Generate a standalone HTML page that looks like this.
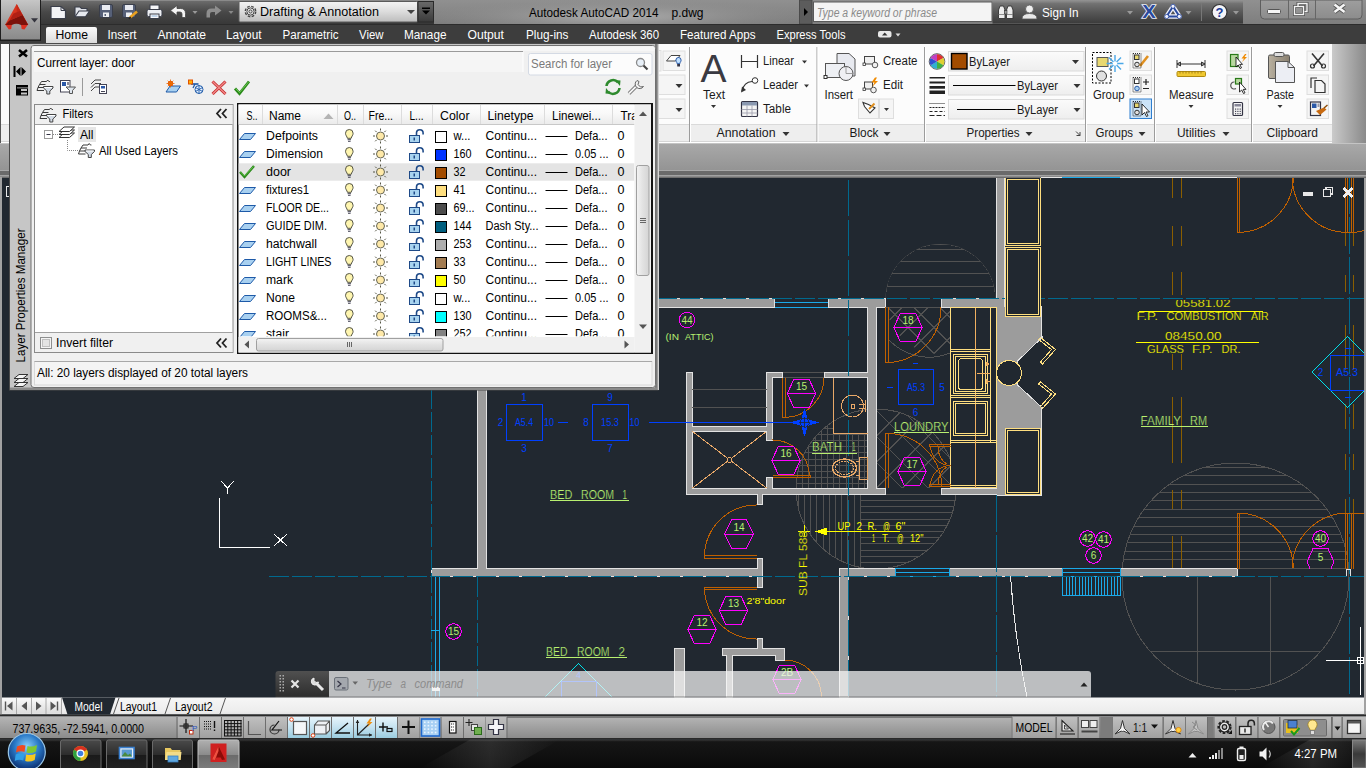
<!DOCTYPE html>
<html><head><meta charset="utf-8">
<style>
*{box-sizing:border-box;margin:0;padding:0}
html,body{width:1366px;height:768px;overflow:hidden;background:#212830;font-family:"Liberation Sans",sans-serif;font-size:12px;color:#000}
.a{position:absolute}
.t{position:absolute;white-space:nowrap;line-height:1}
#title{left:0;top:0;width:1366px;height:24px;background:linear-gradient(#8e8e8e,#7c7c7c)}
#qat{left:40px;top:0;width:394px;height:24px;background:linear-gradient(#6a6a6a 0%,#4a4a4a 45%,#3a3a3a 100%)}
#menubar{left:0;top:24px;width:1366px;height:20px;background:#3c3c3c}
#ribbon{left:0;top:44px;width:1332px;height:99px;background:#fff}
#ribtitle{left:0;top:123px;width:1332px;height:19px;background:#ececec}
#ribright{left:1332px;top:44px;width:34px;height:99px;background:linear-gradient(90deg,#c8c8c8,#8c8c8c)}
#band{left:0;top:143px;width:1366px;height:34px;background:linear-gradient(#a9a9a9 0,#949494 27px,#6a6a6a 28px,#6a6a6a 32px,#9c9c9c 32px,#9c9c9c 34px)}
#draw{left:0;top:177px;width:1366px;height:521px;background:#212830}
#tabs{left:0;top:698px;width:1366px;height:18px;background:#f0f0f0}
#status{left:0;top:716px;width:1366px;height:23px;background:linear-gradient(#b4b4b4,#8a8a8a)}
#task{left:0;top:739px;width:1366px;height:29px;background:linear-gradient(#2a2a2a,#0c0c0c)}
.mt{color:#fff;font-size:12.5px;top:29px}
</style></head><body>
<div id="draw" class="a"></div>
<svg class="a" style="left:0;top:0" width="1366" height="768" viewBox="0 0 1366 768" font-family="Liberation Sans, sans-serif" shape-rendering="crispEdges">
<defs>
<clipPath id="cd"><rect x="0" y="177" width="1366" height="520.5"/></clipPath>
</defs>
<g clip-path="url(#cd)" fill="none" stroke-width="1">
<clipPath id="cA1"><path d="M885.5 299 A55 55 0 0 1 995.5 299 Z"/></clipPath>
<clipPath id="cA2"><path d="M887 307 H950 V354 H887 Z"/></clipPath>
<circle cx="940.5" cy="299" r="55" stroke="#525252" clip-path="url(#cA1)"/>
<g clip-path="url(#cA1)">
<line x1="880" y1="249.5" x2="1000" y2="249.5" stroke="#525252" stroke-width="1" />
<line x1="880" y1="261.5" x2="1000" y2="261.5" stroke="#525252" stroke-width="1" />
<line x1="880" y1="273.5" x2="1000" y2="273.5" stroke="#525252" stroke-width="1" />
<line x1="880" y1="286.5" x2="1000" y2="286.5" stroke="#525252" stroke-width="1" />
</g>
<clipPath id="cA3"><circle cx="940.5" cy="299" r="55"/></clipPath>
<g clip-path="url(#cA3)"><g clip-path="url(#cA2)">
<line x1="731.3" y1="307" x2="791.3" y2="367" stroke="#525252" stroke-width="1" />
<line x1="746.7" y1="307" x2="686.7" y2="367" stroke="#525252" stroke-width="1" />
<line x1="757.3" y1="307" x2="817.3" y2="367" stroke="#525252" stroke-width="1" />
<line x1="772.7" y1="307" x2="712.7" y2="367" stroke="#525252" stroke-width="1" />
<line x1="783.3" y1="307" x2="843.3" y2="367" stroke="#525252" stroke-width="1" />
<line x1="798.7" y1="307" x2="738.7" y2="367" stroke="#525252" stroke-width="1" />
<line x1="809.3" y1="307" x2="869.3" y2="367" stroke="#525252" stroke-width="1" />
<line x1="824.7" y1="307" x2="764.7" y2="367" stroke="#525252" stroke-width="1" />
<line x1="835.3" y1="307" x2="895.3" y2="367" stroke="#525252" stroke-width="1" />
<line x1="850.7" y1="307" x2="790.7" y2="367" stroke="#525252" stroke-width="1" />
<line x1="861.3" y1="307" x2="921.3" y2="367" stroke="#525252" stroke-width="1" />
<line x1="876.7" y1="307" x2="816.7" y2="367" stroke="#525252" stroke-width="1" />
<line x1="887.3" y1="307" x2="947.3" y2="367" stroke="#525252" stroke-width="1" />
<line x1="902.7" y1="307" x2="842.7" y2="367" stroke="#525252" stroke-width="1" />
<line x1="913.3" y1="307" x2="973.3" y2="367" stroke="#525252" stroke-width="1" />
<line x1="928.7" y1="307" x2="868.7" y2="367" stroke="#525252" stroke-width="1" />
<line x1="939.3" y1="307" x2="999.3" y2="367" stroke="#525252" stroke-width="1" />
<line x1="954.7" y1="307" x2="894.7" y2="367" stroke="#525252" stroke-width="1" />
<line x1="965.3" y1="307" x2="1025.3" y2="367" stroke="#525252" stroke-width="1" />
<line x1="980.7" y1="307" x2="920.7" y2="367" stroke="#525252" stroke-width="1" />
<line x1="991.3" y1="307" x2="1051.3" y2="367" stroke="#525252" stroke-width="1" />
<line x1="1006.7" y1="307" x2="946.7" y2="367" stroke="#525252" stroke-width="1" />
<line x1="1017.3" y1="307" x2="1077.3" y2="367" stroke="#525252" stroke-width="1" />
<line x1="1032.7" y1="307" x2="972.7" y2="367" stroke="#525252" stroke-width="1" />
<line x1="1043.3" y1="307" x2="1103.3" y2="367" stroke="#525252" stroke-width="1" />
<line x1="1058.7" y1="307" x2="998.7" y2="367" stroke="#525252" stroke-width="1" />
<line x1="1069.3" y1="307" x2="1129.3" y2="367" stroke="#525252" stroke-width="1" />
<line x1="1084.7" y1="307" x2="1024.7" y2="367" stroke="#525252" stroke-width="1" />
</g>
<path d="M887 351 A55 55 0 0 0 950 353" stroke="#525252" clip-path="url(#cA2)"/>
</g>
<path d="M889 340 A55 55 0 0 0 950 353" stroke="#525252"/>
<clipPath id="cB"><circle cx="876" cy="489" r="80"/></clipPath>
<circle cx="876" cy="489" r="80" stroke="#525252"/>
<clipPath id="cB1"><path d="M772 378 H833 V434 H867.5 V488 H772 Z"/></clipPath>
<g clip-path="url(#cB)"><g clip-path="url(#cB1)">
<line x1="796.5" y1="378" x2="796.5" y2="488" stroke="#525252" stroke-width="1" />
<line x1="802.5" y1="378" x2="802.5" y2="488" stroke="#525252" stroke-width="1" />
<line x1="808.5" y1="378" x2="808.5" y2="488" stroke="#525252" stroke-width="1" />
<line x1="815.5" y1="378" x2="815.5" y2="488" stroke="#525252" stroke-width="1" />
<line x1="821.5" y1="378" x2="821.5" y2="488" stroke="#525252" stroke-width="1" />
<line x1="827.5" y1="378" x2="827.5" y2="488" stroke="#525252" stroke-width="1" />
<line x1="833.5" y1="378" x2="833.5" y2="488" stroke="#525252" stroke-width="1" />
<line x1="839.5" y1="378" x2="839.5" y2="488" stroke="#525252" stroke-width="1" />
<line x1="846.5" y1="378" x2="846.5" y2="488" stroke="#525252" stroke-width="1" />
<line x1="852.5" y1="378" x2="852.5" y2="488" stroke="#525252" stroke-width="1" />
<line x1="858.5" y1="378" x2="858.5" y2="488" stroke="#525252" stroke-width="1" />
<line x1="864.5" y1="378" x2="864.5" y2="488" stroke="#525252" stroke-width="1" />
<line x1="772" y1="409.5" x2="868" y2="409.5" stroke="#525252" stroke-width="1" />
<line x1="772" y1="415.5" x2="868" y2="415.5" stroke="#525252" stroke-width="1" />
<line x1="772" y1="421.5" x2="868" y2="421.5" stroke="#525252" stroke-width="1" />
<line x1="772" y1="428.5" x2="868" y2="428.5" stroke="#525252" stroke-width="1" />
<line x1="772" y1="434.5" x2="868" y2="434.5" stroke="#525252" stroke-width="1" />
<line x1="772" y1="440.5" x2="868" y2="440.5" stroke="#525252" stroke-width="1" />
<line x1="772" y1="446.5" x2="868" y2="446.5" stroke="#525252" stroke-width="1" />
<line x1="772" y1="452.5" x2="868" y2="452.5" stroke="#525252" stroke-width="1" />
<line x1="772" y1="459.5" x2="868" y2="459.5" stroke="#525252" stroke-width="1" />
<line x1="772" y1="465.5" x2="868" y2="465.5" stroke="#525252" stroke-width="1" />
<line x1="772" y1="471.5" x2="868" y2="471.5" stroke="#525252" stroke-width="1" />
<line x1="772" y1="477.5" x2="868" y2="477.5" stroke="#525252" stroke-width="1" />
<line x1="772" y1="483.5" x2="868" y2="483.5" stroke="#525252" stroke-width="1" />
</g></g>
<clipPath id="cB2"><rect x="877" y="405" width="74" height="83"/></clipPath>
<g clip-path="url(#cB)"><g clip-path="url(#cB2)">
<line x1="710" y1="400" x2="810" y2="500" stroke="#525252" stroke-width="1" />
<line x1="756.3" y1="400" x2="656.3" y2="500" stroke="#525252" stroke-width="1" />
<line x1="736" y1="400" x2="836" y2="500" stroke="#525252" stroke-width="1" />
<line x1="782.3" y1="400" x2="682.3" y2="500" stroke="#525252" stroke-width="1" />
<line x1="762" y1="400" x2="862" y2="500" stroke="#525252" stroke-width="1" />
<line x1="808.3" y1="400" x2="708.3" y2="500" stroke="#525252" stroke-width="1" />
<line x1="788" y1="400" x2="888" y2="500" stroke="#525252" stroke-width="1" />
<line x1="834.3" y1="400" x2="734.3" y2="500" stroke="#525252" stroke-width="1" />
<line x1="814" y1="400" x2="914" y2="500" stroke="#525252" stroke-width="1" />
<line x1="860.3" y1="400" x2="760.3" y2="500" stroke="#525252" stroke-width="1" />
<line x1="840" y1="400" x2="940" y2="500" stroke="#525252" stroke-width="1" />
<line x1="886.3" y1="400" x2="786.3" y2="500" stroke="#525252" stroke-width="1" />
<line x1="866" y1="400" x2="966" y2="500" stroke="#525252" stroke-width="1" />
<line x1="912.3" y1="400" x2="812.3" y2="500" stroke="#525252" stroke-width="1" />
<line x1="892" y1="400" x2="992" y2="500" stroke="#525252" stroke-width="1" />
<line x1="938.3" y1="400" x2="838.3" y2="500" stroke="#525252" stroke-width="1" />
<line x1="918" y1="400" x2="1018" y2="500" stroke="#525252" stroke-width="1" />
<line x1="964.3" y1="400" x2="864.3" y2="500" stroke="#525252" stroke-width="1" />
<line x1="944" y1="400" x2="1044" y2="500" stroke="#525252" stroke-width="1" />
<line x1="990.3" y1="400" x2="890.3" y2="500" stroke="#525252" stroke-width="1" />
<line x1="970" y1="400" x2="1070" y2="500" stroke="#525252" stroke-width="1" />
<line x1="1016.3" y1="400" x2="916.3" y2="500" stroke="#525252" stroke-width="1" />
<line x1="996" y1="400" x2="1096" y2="500" stroke="#525252" stroke-width="1" />
<line x1="1042.3" y1="400" x2="942.3" y2="500" stroke="#525252" stroke-width="1" />
<line x1="1022" y1="400" x2="1122" y2="500" stroke="#525252" stroke-width="1" />
<line x1="1068.3" y1="400" x2="968.3" y2="500" stroke="#525252" stroke-width="1" />
<line x1="1048" y1="400" x2="1148" y2="500" stroke="#525252" stroke-width="1" />
<line x1="1094.3" y1="400" x2="994.3" y2="500" stroke="#525252" stroke-width="1" />
</g></g>
<clipPath id="cB3"><rect x="790" y="495" width="70" height="80"/></clipPath>
<g clip-path="url(#cB)"><g clip-path="url(#cB3)">
<line x1="798.5" y1="495" x2="798.5" y2="575" stroke="#525252" stroke-width="1" />
<line x1="804.5" y1="495" x2="804.5" y2="575" stroke="#525252" stroke-width="1" />
<line x1="810.5" y1="495" x2="810.5" y2="575" stroke="#525252" stroke-width="1" />
<line x1="816.5" y1="495" x2="816.5" y2="575" stroke="#525252" stroke-width="1" />
<line x1="823.5" y1="495" x2="823.5" y2="575" stroke="#525252" stroke-width="1" />
<line x1="829.5" y1="495" x2="829.5" y2="575" stroke="#525252" stroke-width="1" />
<line x1="835.5" y1="495" x2="835.5" y2="575" stroke="#525252" stroke-width="1" />
<line x1="841.5" y1="495" x2="841.5" y2="575" stroke="#525252" stroke-width="1" />
<line x1="847.5" y1="495" x2="847.5" y2="575" stroke="#525252" stroke-width="1" />
<line x1="854.5" y1="495" x2="854.5" y2="575" stroke="#525252" stroke-width="1" />
<line x1="860.5" y1="495" x2="860.5" y2="575" stroke="#525252" stroke-width="1" />
</g></g>
<clipPath id="cB4"><rect x="860" y="495" width="100" height="80"/></clipPath>
<g clip-path="url(#cB)"><g clip-path="url(#cB4)">
<line x1="860" y1="500.5" x2="960" y2="500.5" stroke="#525252" stroke-width="1" />
<line x1="860" y1="506.5" x2="960" y2="506.5" stroke="#525252" stroke-width="1" />
<line x1="860" y1="512.5" x2="960" y2="512.5" stroke="#525252" stroke-width="1" />
<line x1="860" y1="519.5" x2="960" y2="519.5" stroke="#525252" stroke-width="1" />
<line x1="860" y1="525.5" x2="960" y2="525.5" stroke="#525252" stroke-width="1" />
<line x1="860" y1="531.5" x2="960" y2="531.5" stroke="#525252" stroke-width="1" />
<line x1="860" y1="537.5" x2="960" y2="537.5" stroke="#525252" stroke-width="1" />
<line x1="860" y1="543.5" x2="960" y2="543.5" stroke="#525252" stroke-width="1" />
<line x1="860" y1="550.5" x2="960" y2="550.5" stroke="#525252" stroke-width="1" />
<line x1="860" y1="556.5" x2="960" y2="556.5" stroke="#525252" stroke-width="1" />
<line x1="860" y1="562.5" x2="960" y2="562.5" stroke="#525252" stroke-width="1" />
<line x1="860" y1="568.5" x2="960" y2="568.5" stroke="#525252" stroke-width="1" />
<line x1="860" y1="574.5" x2="960" y2="574.5" stroke="#525252" stroke-width="1" />
</g></g>
<line x1="860.5" y1="495" x2="860.5" y2="568" stroke="#525252" stroke-width="1" />
<clipPath id="cC"><circle cx="1235.5" cy="576.5" r="113.5"/></clipPath>
<circle cx="1235.5" cy="576.5" r="113.5" stroke="#525252"/>
<g clip-path="url(#cC)">
<line x1="1120" y1="467.5" x2="1350" y2="467.5" stroke="#525252" stroke-width="1" />
<line x1="1120" y1="475.5" x2="1350" y2="475.5" stroke="#525252" stroke-width="1" />
<line x1="1120" y1="484.5" x2="1350" y2="484.5" stroke="#525252" stroke-width="1" />
<line x1="1120" y1="492.5" x2="1350" y2="492.5" stroke="#525252" stroke-width="1" />
<line x1="1120" y1="500.5" x2="1350" y2="500.5" stroke="#525252" stroke-width="1" />
<line x1="1120" y1="509.5" x2="1350" y2="509.5" stroke="#525252" stroke-width="1" />
<line x1="1120" y1="517.5" x2="1350" y2="517.5" stroke="#525252" stroke-width="1" />
<line x1="1120" y1="526.5" x2="1350" y2="526.5" stroke="#525252" stroke-width="1" />
<line x1="1120" y1="534.5" x2="1350" y2="534.5" stroke="#525252" stroke-width="1" />
<line x1="1120" y1="542.5" x2="1350" y2="542.5" stroke="#525252" stroke-width="1" />
<line x1="1120" y1="551.5" x2="1350" y2="551.5" stroke="#525252" stroke-width="1" />
<line x1="1120" y1="559.5" x2="1350" y2="559.5" stroke="#525252" stroke-width="1" />
<line x1="1197.5" y1="576" x2="1197.5" y2="692" stroke="#525252" stroke-width="1" />
<line x1="1270.5" y1="576" x2="1270.5" y2="692" stroke="#525252" stroke-width="1" />
<line x1="1120" y1="651.5" x2="1350" y2="651.5" stroke="#525252" stroke-width="1" />
</g>
<filter id="er" color-interpolation-filters="sRGB" filterUnits="userSpaceOnUse" x="0" y="0" width="1366" height="768"><feMorphology operator="erode" radius="1"/><feColorMatrix type="matrix" values="0 0 0 0 0.61 0 0 0 0 0.61 0 0 0 0 0.61 0 0 0 1 0"/></filter>
<g fill="#e2e2e2" stroke="none"><rect x="640" y="298" width="135" height="10"/><rect x="828" y="298" width="58" height="10"/><rect x="941" y="298" width="64" height="10"/><rect x="867" y="306" width="10" height="189"/><rect x="996" y="177" width="9" height="131"/><rect x="996" y="306" width="46" height="190"/><rect x="941" y="488" width="64" height="7"/><rect x="686" y="372" width="7" height="123"/><rect x="686" y="488" width="200" height="7"/><rect x="766" y="372" width="7" height="69"/><rect x="766" y="477" width="7" height="13"/><rect x="766" y="372" width="17" height="6"/><rect x="824" y="372" width="45" height="6"/><rect x="691" y="426" width="77" height="6"/><rect x="757" y="493" width="6" height="12"/><rect x="757" y="558" width="6" height="30"/><rect x="477" y="389" width="10" height="181"/><rect x="431" y="568" width="332" height="9"/><rect x="757" y="638" width="6" height="12"/><rect x="722" y="648" width="63" height="8"/><rect x="726" y="654" width="7" height="45"/><rect x="775" y="654" width="10" height="7"/><rect x="674" y="648" width="11" height="51"/><rect x="839" y="568" width="10" height="131"/><rect x="839" y="568" width="57" height="9"/><rect x="949" y="568" width="114" height="9"/><rect x="1120" y="568" width="118" height="9"/></g>
<g fill="#e2e2e2" stroke="none" filter="url(#er)"><rect x="640" y="298" width="135" height="10"/><rect x="828" y="298" width="58" height="10"/><rect x="941" y="298" width="64" height="10"/><rect x="867" y="306" width="10" height="189"/><rect x="996" y="177" width="9" height="131"/><rect x="996" y="306" width="46" height="190"/><rect x="941" y="488" width="64" height="7"/><rect x="686" y="372" width="7" height="123"/><rect x="686" y="488" width="200" height="7"/><rect x="766" y="372" width="7" height="69"/><rect x="766" y="477" width="7" height="13"/><rect x="766" y="372" width="17" height="6"/><rect x="824" y="372" width="45" height="6"/><rect x="691" y="426" width="77" height="6"/><rect x="757" y="493" width="6" height="12"/><rect x="757" y="558" width="6" height="30"/><rect x="477" y="389" width="10" height="181"/><rect x="431" y="568" width="332" height="9"/><rect x="757" y="638" width="6" height="12"/><rect x="722" y="648" width="63" height="8"/><rect x="726" y="654" width="7" height="45"/><rect x="775" y="654" width="10" height="7"/><rect x="674" y="648" width="11" height="51"/><rect x="839" y="568" width="10" height="131"/><rect x="839" y="568" width="57" height="9"/><rect x="949" y="568" width="114" height="9"/><rect x="1120" y="568" width="118" height="9"/></g>
<path d="M1042 337.5 L1017 361.5 V384.5 L1042 407.5 Z" fill="#212830" stroke="#e2e2e2" stroke-width="1"/>
<rect x="1041" y="338" width="2" height="69" fill="#212830" stroke="none" />
<line x1="775" y1="302.5" x2="828" y2="302.5" stroke="#1aa9e8" stroke-width="1" />
<line x1="775" y1="307.5" x2="828" y2="307.5" stroke="#1aa9e8" stroke-width="1" />
<line x1="783" y1="372.5" x2="824" y2="372.5" stroke="#525252" stroke-width="1" />
<line x1="783" y1="377.5" x2="824" y2="377.5" stroke="#525252" stroke-width="1" />
<line x1="692" y1="389.5" x2="766.5" y2="389.5" stroke="#525252" stroke-width="1" />
<line x1="692" y1="407.5" x2="766.5" y2="407.5" stroke="#525252" stroke-width="1" />
<line x1="886" y1="307.5" x2="941" y2="307.5" stroke="#525252" stroke-width="1" />
<line x1="886" y1="494.5" x2="941" y2="494.5" stroke="#525252" stroke-width="1" />
<line x1="895.5" y1="568.5" x2="949.5" y2="568.5" stroke="#1aa9e8" stroke-width="1" />
<line x1="895.5" y1="572.5" x2="949.5" y2="572.5" stroke="#1aa9e8" stroke-width="1" />
<line x1="895.5" y1="576.5" x2="949.5" y2="576.5" stroke="#1aa9e8" stroke-width="1" />
<line x1="895.5" y1="568" x2="895.5" y2="576" stroke="#1aa9e8" stroke-width="1" />
<line x1="949.5" y1="568" x2="949.5" y2="576" stroke="#1aa9e8" stroke-width="1" />
<line x1="1062.5" y1="568.5" x2="1120" y2="568.5" stroke="#1aa9e8" stroke-width="1" />
<line x1="1062.5" y1="572.5" x2="1120" y2="572.5" stroke="#1aa9e8" stroke-width="1" />
<line x1="1062.5" y1="576.5" x2="1120" y2="576.5" stroke="#1aa9e8" stroke-width="1" />
<line x1="1062.5" y1="568" x2="1062.5" y2="576" stroke="#1aa9e8" stroke-width="1" />
<line x1="1120.5" y1="568" x2="1120.5" y2="576" stroke="#1aa9e8" stroke-width="1" />
<line x1="1062.5" y1="576" x2="1062.5" y2="595.5" stroke="#1aa9e8" stroke-width="1" />
<line x1="1066.5" y1="576" x2="1066.5" y2="595.5" stroke="#1aa9e8" stroke-width="1" />
<line x1="1069.5" y1="576" x2="1069.5" y2="595.5" stroke="#1aa9e8" stroke-width="1" />
<line x1="1072.5" y1="576" x2="1072.5" y2="595.5" stroke="#1aa9e8" stroke-width="1" />
<line x1="1075.5" y1="576" x2="1075.5" y2="595.5" stroke="#1aa9e8" stroke-width="1" />
<line x1="1079.5" y1="576" x2="1079.5" y2="595.5" stroke="#1aa9e8" stroke-width="1" />
<line x1="1082.5" y1="576" x2="1082.5" y2="595.5" stroke="#1aa9e8" stroke-width="1" />
<line x1="1085.5" y1="576" x2="1085.5" y2="595.5" stroke="#1aa9e8" stroke-width="1" />
<line x1="1088.5" y1="576" x2="1088.5" y2="595.5" stroke="#1aa9e8" stroke-width="1" />
<line x1="1091.5" y1="576" x2="1091.5" y2="595.5" stroke="#1aa9e8" stroke-width="1" />
<line x1="1095.5" y1="576" x2="1095.5" y2="595.5" stroke="#1aa9e8" stroke-width="1" />
<line x1="1098.5" y1="576" x2="1098.5" y2="595.5" stroke="#1aa9e8" stroke-width="1" />
<line x1="1101.5" y1="576" x2="1101.5" y2="595.5" stroke="#1aa9e8" stroke-width="1" />
<line x1="1104.5" y1="576" x2="1104.5" y2="595.5" stroke="#1aa9e8" stroke-width="1" />
<line x1="1107.5" y1="576" x2="1107.5" y2="595.5" stroke="#1aa9e8" stroke-width="1" />
<line x1="1111.5" y1="576" x2="1111.5" y2="595.5" stroke="#1aa9e8" stroke-width="1" />
<line x1="1114.5" y1="576" x2="1114.5" y2="595.5" stroke="#1aa9e8" stroke-width="1" />
<line x1="1117.5" y1="576" x2="1117.5" y2="595.5" stroke="#1aa9e8" stroke-width="1" />
<line x1="1120.5" y1="576" x2="1120.5" y2="595.5" stroke="#1aa9e8" stroke-width="1" />
<line x1="1062" y1="595.5" x2="1120.5" y2="595.5" stroke="#1aa9e8" stroke-width="1" />
<line x1="1237.5" y1="568.5" x2="1348" y2="568.5" stroke="#525252" stroke-width="1" />
<line x1="657" y1="298.5" x2="1366" y2="298.5" stroke="#00698e" stroke-width="1" stroke-dasharray="20 3" />
<line x1="269" y1="576.5" x2="1366" y2="576.5" stroke="#00698e" stroke-width="1" stroke-dasharray="20 3" />
<line x1="431.5" y1="389" x2="431.5" y2="697" stroke="#00698e" stroke-width="1" stroke-dasharray="20 3" />
<line x1="848.5" y1="179.5" x2="848.5" y2="697" stroke="#00698e" stroke-width="1" stroke-dasharray="36.5 3.5" />
<line x1="996.5" y1="495" x2="996.5" y2="697" stroke="#00698e" stroke-width="1" stroke-dasharray="36.5 3.5" />
<line x1="1349.5" y1="177" x2="1349.5" y2="697" stroke="#00698e" stroke-width="1" stroke-dasharray="36.5 3.5" />
<line x1="477.5" y1="577" x2="477.5" y2="697" stroke="#00698e" stroke-width="1" stroke-dasharray="20 3" />
<line x1="435.5" y1="577" x2="435.5" y2="697" stroke="#1aa9e8" stroke-width="1" />
<line x1="439.5" y1="577" x2="439.5" y2="697" stroke="#1aa9e8" stroke-width="1" />
<line x1="431" y1="630.5" x2="439" y2="630.5" stroke="#1aa9e8" stroke-width="1" />
<rect x="431.5" y="686.5" width="8.0" height="4.5" fill="#e8e8e8" stroke="none" />
<line x1="1172.5" y1="177" x2="1172.5" y2="198" stroke="#8a5e00" stroke-width="1" />
<line x1="1172.5" y1="226" x2="1172.5" y2="246" stroke="#8a5e00" stroke-width="1" />
<line x1="1172.5" y1="272" x2="1172.5" y2="295" stroke="#8a5e00" stroke-width="1" />
<line x1="1172.5" y1="354" x2="1172.5" y2="370" stroke="#8a5e00" stroke-width="1" />
<line x1="1172.5" y1="397" x2="1172.5" y2="463" stroke="#8a5e00" stroke-width="1" />
<line x1="1172.5" y1="490" x2="1172.5" y2="509" stroke="#8a5e00" stroke-width="1" />
<line x1="1172.5" y1="536" x2="1172.5" y2="568" stroke="#8a5e00" stroke-width="1" />
<line x1="1181.5" y1="177" x2="1181.5" y2="198" stroke="#8a5e00" stroke-width="1" />
<line x1="1181.5" y1="226" x2="1181.5" y2="246" stroke="#8a5e00" stroke-width="1" />
<line x1="1181.5" y1="272" x2="1181.5" y2="295" stroke="#8a5e00" stroke-width="1" />
<line x1="1181.5" y1="354" x2="1181.5" y2="370" stroke="#8a5e00" stroke-width="1" />
<line x1="1181.5" y1="397" x2="1181.5" y2="463" stroke="#8a5e00" stroke-width="1" />
<line x1="1181.5" y1="490" x2="1181.5" y2="509" stroke="#8a5e00" stroke-width="1" />
<line x1="1181.5" y1="536" x2="1181.5" y2="568" stroke="#8a5e00" stroke-width="1" />
<line x1="1345.5" y1="177" x2="1345.5" y2="246" stroke="#8a5e00" stroke-width="1" />
<line x1="1345.5" y1="274.5" x2="1345.5" y2="292" stroke="#8a5e00" stroke-width="1" />
<line x1="1345.5" y1="324.5" x2="1345.5" y2="370" stroke="#8a5e00" stroke-width="1" />
<line x1="1345.5" y1="404" x2="1345.5" y2="429" stroke="#8a5e00" stroke-width="1" />
<line x1="1345.5" y1="454" x2="1345.5" y2="470" stroke="#8a5e00" stroke-width="1" />
<line x1="1345.5" y1="499" x2="1345.5" y2="513" stroke="#8a5e00" stroke-width="1" />
<line x1="1345.5" y1="536" x2="1345.5" y2="568" stroke="#8a5e00" stroke-width="1" />
<line x1="1353.5" y1="177" x2="1353.5" y2="246" stroke="#8a5e00" stroke-width="1" />
<line x1="1353.5" y1="274.5" x2="1353.5" y2="292" stroke="#8a5e00" stroke-width="1" />
<line x1="1353.5" y1="324.5" x2="1353.5" y2="370" stroke="#8a5e00" stroke-width="1" />
<line x1="1353.5" y1="404" x2="1353.5" y2="429" stroke="#8a5e00" stroke-width="1" />
<line x1="1353.5" y1="454" x2="1353.5" y2="470" stroke="#8a5e00" stroke-width="1" />
<line x1="1353.5" y1="499" x2="1353.5" y2="513" stroke="#8a5e00" stroke-width="1" />
<line x1="1353.5" y1="536" x2="1353.5" y2="568" stroke="#8a5e00" stroke-width="1" />
<rect x="1005.5" y="177.5" width="35.0" height="68.0" stroke="#ffdf80" fill="#212830"/>
<rect x="1007.5" y="179.5" width="31.0" height="64.0" stroke="#ffdf80"/>
<rect x="1005.5" y="247.5" width="35.0" height="69.0" stroke="#ffdf80" fill="#212830"/>
<rect x="1007.5" y="249.5" width="31.0" height="65.0" stroke="#ffdf80"/>
<rect x="1005.5" y="428.5" width="35.0" height="66.0" stroke="#ffdf80" fill="#212830"/>
<rect x="1007.5" y="430.5" width="31.0" height="62.0" stroke="#ffdf80"/>
<path d="M1040.5 337.5 L1055.5 349.5 L1042.5 364 L1040.5 362 L1051.5 349.5 L1038.5 339.5 Z" stroke="#ffdf80" stroke-width="1" fill="none" />
<path d="M1040.5 382.0 L1055.5 394.0 L1042.5 408.5 L1040.5 406.5 L1051.5 394.0 L1038.5 384.0 Z" stroke="#ffdf80" stroke-width="1" fill="none" />
<circle cx="1009" cy="373" r="12.5" stroke="#ffdf80" fill="#212830"/>
<rect x="950.5" y="307.5" width="46" height="180" stroke="#ffdf80" fill="#212830"/>
<line x1="990.5" y1="307.5" x2="990.5" y2="442" stroke="#ffdf80" stroke-width="1" />
<line x1="950.5" y1="349.5" x2="990.5" y2="349.5" stroke="#ffdf80" stroke-width="1" />
<line x1="950.5" y1="351.5" x2="990.5" y2="351.5" stroke="#ffdf80" stroke-width="1" />
<line x1="950.5" y1="395.5" x2="990.5" y2="395.5" stroke="#ffdf80" stroke-width="1" />
<line x1="950.5" y1="397.5" x2="990.5" y2="397.5" stroke="#ffdf80" stroke-width="1" />
<line x1="950.5" y1="440.5" x2="996.5" y2="440.5" stroke="#ffdf80" stroke-width="1" />
<line x1="950.5" y1="442.5" x2="996.5" y2="442.5" stroke="#ffdf80" stroke-width="1" />
<line x1="950.5" y1="485.5" x2="996.5" y2="485.5" stroke="#ffdf80" stroke-width="1" />
<line x1="975.5" y1="307.5" x2="975.5" y2="488" stroke="#f0b060" stroke-width="1" />
<rect x="953.5" y="354.5" width="34" height="39" stroke="#ffdf80"/>
<rect x="955.5" y="356.5" width="30" height="35" stroke="#ffdf80"/>
<rect x="958.5" y="358.5" width="24" height="31" rx="3" stroke="#ffdf80"/>
<rect x="953.5" y="401.5" width="34" height="34" stroke="#ffdf80"/>
<rect x="955.5" y="403.5" width="30" height="30" stroke="#ffdf80"/>
<line x1="976.5" y1="373.5" x2="989.5" y2="373.5" stroke="#f0b060" stroke-width="1" />
<path d="M986 362 l3 2 l-3 2 Z M986 379.5 l3 2 l-3 2 Z" stroke="#f0b060" stroke-width="1" fill="#f0b060" />
<line x1="692.5" y1="431.5" x2="766.5" y2="488" stroke="#e8a868" stroke-width="1" />
<line x1="692.5" y1="488" x2="766.5" y2="431.5" stroke="#e8a868" stroke-width="1" />
<circle cx="729.5" cy="460" r="2.5" stroke="#e8a868" fill="#212830"/>
<path d="M833.5 377.5 V433.5 H867.5" stroke="#e8a868" stroke-width="1" fill="none" />
<circle cx="852.5" cy="406" r="11" stroke="#e8a868"/>
<rect x="851" y="404" width="3" height="4" stroke="#e8a868"/>
<path d="M859 404 H866 M859 408 H866 M865 400 V412" stroke="#e8a868" stroke-width="1" fill="none" />
<ellipse cx="844.5" cy="468" rx="12" ry="9" stroke="#e8a868" stroke-width="1.5"/>
<ellipse cx="844.5" cy="468" rx="9" ry="6.5" stroke="#e8a868" stroke-dasharray="2 1"/>
<rect x="859.5" y="457.5" width="8" height="22" stroke="#e8a868" stroke-width="1.5"/>
<line x1="856" y1="461.5" x2="859" y2="461.5" stroke="#e8a868" stroke-width="1" />
<line x1="856" y1="475.5" x2="859" y2="475.5" stroke="#e8a868" stroke-width="1" />
<path d="M885.5 307 V362.5 H888 V307 M888 362.5 A55 55 0 0 0 941 307" stroke="#bf6000" stroke-width="1" fill="none" />
<path d="M782.5 377.5 V417.5 H785 V377.5 M785 417.5 A40 40 0 0 0 824 377.5" stroke="#bf6000" stroke-width="1" fill="none" />
<path d="M772.5 475 H810 V477.5 H772.5 M772.5 440 A37 37 0 0 1 809.5 475" stroke="#bf6000" stroke-width="1" fill="none" />
<path d="M885.5 488 V433.5 H888 V488 M888 433.5 A55 55 0 0 1 942 487" stroke="#bf6000" stroke-width="1" fill="none" />
<path d="M951 444.5 H929.5 V446.5 H951 M951 486.5 H929.5 V484.5 H951 M930.5 446.5 A20 20 0 0 0 950.5 465.5 A20 20 0 0 0 930.5 484.5 M938 446.5 A14 18 0 0 0 947 464 M938 484.5 A14 18 0 0 1 947 467" stroke="#bf6000" stroke-width="1" fill="none" />
<path d="M757 555.5 H704.5 V558 H757 M704.5 555.5 A52 52 0 0 1 757 505" stroke="#bf6000" stroke-width="1" fill="none" />
<path d="M757 587 H704.5 V589.5 H757 M704.5 589.5 A52 52 0 0 0 757 639" stroke="#bf6000" stroke-width="1" fill="none" />
<path d="M784.5 660 A37 37 0 0 1 821.5 697" stroke="#bf6000" stroke-width="1" fill="none" />
<path d="M1237.5 177 V232.5 H1239.5 V177 M1237.5 232.5 A55.8 55.8 0 0 0 1293.3 177 M1348 232.5 A55.8 55.8 0 0 1 1292.2 177 M1345.5 177 V232.5 H1353.5 V177 M1347.5 177 V232.5 M1351.5 177 V232.5 M1353.5 232.5 Q1360 232 1366 230" stroke="#bf6000" stroke-width="1" fill="none" />
<path d="M1237.5 568.5 V513 H1239.5 V568.5 M1237.5 513 H1243 M1237.5 513 A55.8 55.8 0 0 1 1293.3 568.5 M1348 513 A55.8 55.8 0 0 0 1292.2 568.5 M1345.5 568.5 V513 H1353.5 V568.5 M1347.5 568.5 V513 M1351.5 568.5 V513 M1353.5 513 H1366" stroke="#bf6000" stroke-width="1" fill="none" />
<path d="M1010.5 576 Q1015 640 1027 697" stroke="#e8e8e8" stroke-width="1" fill="none" />
<rect x="506.5" y="404.5" width="35.5" height="35.5" stroke="#0040ff"/>
<rect x="592" y="404.5" width="36" height="35.5" stroke="#0040ff"/>
<line x1="558" y1="422.5" x2="568" y2="422.5" stroke="#0040ff" stroke-width="1" />
<line x1="648.5" y1="422.5" x2="804" y2="422.5" stroke="#0040ff" stroke-width="1" />
<path d="M804.5 409 L807 419.5 L817.5 422.5 L807 425.5 L804.5 436 L802 425.5 L791.5 422.5 L802 419.5 Z" stroke="#0040ff" stroke-width="1" fill="#0040ff" />
<circle cx="804.5" cy="422.5" r="4.5" stroke="#212830" fill="none" stroke-width="0.8"/>
<path d="M804.5 417 V428 M799 422.5 H810" stroke="#212830" stroke-width="0.8" fill="none" />
<rect x="898.5" y="369.5" width="35" height="35" stroke="#0040ff"/>
<line x1="887" y1="387.5" x2="893" y2="387.5" stroke="#0040ff" stroke-width="1" />
<line x1="913" y1="363.5" x2="918" y2="363.5" stroke="#0040ff" stroke-width="1" />
<text x="524" y="425.5" fill="#0040ff" stroke="#212830" stroke-width="0" font-size="10" text-anchor="middle" textLength="18" lengthAdjust="spacingAndGlyphs" >A5.4</text>
<text x="524" y="401" fill="#0040ff" stroke="#212830" stroke-width="0" font-size="10" text-anchor="middle" >1</text>
<text x="500.5" y="425.5" fill="#0040ff" stroke="#212830" stroke-width="0" font-size="10" text-anchor="middle" >2</text>
<text x="549" y="425.5" fill="#0040ff" stroke="#212830" stroke-width="0" font-size="10" text-anchor="middle" textLength="10" lengthAdjust="spacingAndGlyphs" >10</text>
<text x="524" y="451.5" fill="#0040ff" stroke="#212830" stroke-width="0" font-size="10" text-anchor="middle" >3</text>
<text x="610" y="425.5" fill="#0040ff" stroke="#212830" stroke-width="0" font-size="10" text-anchor="middle" textLength="18" lengthAdjust="spacingAndGlyphs" >15.3</text>
<text x="610" y="401" fill="#0040ff" stroke="#212830" stroke-width="0" font-size="10" text-anchor="middle" >9</text>
<text x="586" y="425.5" fill="#0040ff" stroke="#212830" stroke-width="0" font-size="10" text-anchor="middle" >8</text>
<text x="634.5" y="425.5" fill="#0040ff" stroke="#212830" stroke-width="0" font-size="10" text-anchor="middle" textLength="10" lengthAdjust="spacingAndGlyphs" >10</text>
<text x="610" y="451.5" fill="#0040ff" stroke="#212830" stroke-width="0" font-size="10" text-anchor="middle" >7</text>
<text x="916" y="391" fill="#0040ff" stroke="#212830" stroke-width="0" font-size="10" text-anchor="middle" textLength="18" lengthAdjust="spacingAndGlyphs" >A5.3</text>
<text x="942" y="391" fill="#0040ff" stroke="#212830" stroke-width="0" font-size="10" text-anchor="middle" >5</text>
<text x="915.5" y="416" fill="#0040ff" stroke="#212830" stroke-width="0" font-size="10" text-anchor="middle" >6</text>
<path d="M1347.5 336.5 L1312 372 L1347.5 407.5 L1383 372 Z" stroke="#00e0e8" stroke-width="1" fill="none" />
<path d="M1366 355.5 H1330.5 V390.5 H1366" stroke="#0040ff" stroke-width="1" fill="none" />
<text x="1320.5" y="376" fill="#0040ff" stroke="#212830" stroke-width="0" font-size="10" text-anchor="middle" >2</text>
<text x="1347" y="376" fill="#0040ff" stroke="#212830" stroke-width="0" font-size="10" text-anchor="middle" textLength="22" lengthAdjust="spacingAndGlyphs" >A5.3</text>
<line x1="1345" y1="348.5" x2="1351" y2="348.5" stroke="#0040ff" stroke-width="1" />
<line x1="1345" y1="397.5" x2="1351" y2="397.5" stroke="#0040ff" stroke-width="1" />
<path d="M544.5 697.5 L578.5 663.5 L612.5 697.5" stroke="#00e0e8" stroke-width="1" fill="none" />
<path d="M561.5 697 V681.5 H596.5 V697" stroke="#0040ff" stroke-width="1" fill="none" />
<text x="578.5" y="677.5" fill="#0040ff" stroke="#212830" stroke-width="0" font-size="9" text-anchor="middle" >4</text>
<path d="M900.5 313.2 H915.5 L922.3 327.5 L915.5 341.8 H900.5 L893.7 327.5 Z M893.7 327.5 H922.3" stroke="#ff00ff" stroke-width="1" fill="none" />
<text x="908" y="324.0" fill="#b8f070" stroke="#212830" stroke-width="0" font-size="10" text-anchor="middle" >18</text>
<path d="M794.0 379.2 H809.0 L815.8 393.5 L809.0 407.8 H794.0 L787.2 393.5 Z M787.2 393.5 H815.8" stroke="#ff00ff" stroke-width="1" fill="none" />
<text x="801.5" y="390.0" fill="#b8f070" stroke="#212830" stroke-width="0" font-size="10" text-anchor="middle" >15</text>
<path d="M778.5 446.2 H793.5 L800.3 460.5 L793.5 474.8 H778.5 L771.7 460.5 Z M771.7 460.5 H800.3" stroke="#ff00ff" stroke-width="1" fill="none" />
<text x="786" y="457.0" fill="#b8f070" stroke="#212830" stroke-width="0" font-size="10" text-anchor="middle" >16</text>
<path d="M904.5 457.2 H919.5 L926.3 471.5 L919.5 485.8 H904.5 L897.7 471.5 Z M897.7 471.5 H926.3" stroke="#ff00ff" stroke-width="1" fill="none" />
<text x="912" y="468.0" fill="#b8f070" stroke="#212830" stroke-width="0" font-size="10" text-anchor="middle" >17</text>
<path d="M731.5 519.7 H746.5 L753.3 534 L746.5 548.3 H731.5 L724.7 534 Z M724.7 534 H753.3" stroke="#ff00ff" stroke-width="1" fill="none" />
<text x="739" y="530.5" fill="#b8f070" stroke="#212830" stroke-width="0" font-size="10" text-anchor="middle" >14</text>
<path d="M726.0 596.2 H741.0 L747.8 610.5 L741.0 624.8 H726.0 L719.2 610.5 Z M719.2 610.5 H747.8" stroke="#ff00ff" stroke-width="1" fill="none" />
<text x="733.5" y="607.0" fill="#b8f070" stroke="#212830" stroke-width="0" font-size="10" text-anchor="middle" >13</text>
<path d="M694.5 615.2 H709.5 L716.3 629.5 L709.5 643.8 H694.5 L687.7 629.5 Z M687.7 629.5 H716.3" stroke="#ff00ff" stroke-width="1" fill="none" />
<text x="702" y="626.0" fill="#b8f070" stroke="#212830" stroke-width="0" font-size="10" text-anchor="middle" >12</text>
<path d="M779.5 665.2 H794.5 L801.3 679.5 L794.5 693.8 H779.5 L772.7 679.5 Z M772.7 679.5 H801.3" stroke="#ff00ff" stroke-width="1" fill="none" />
<text x="787" y="676.0" fill="#b8f070" stroke="#212830" stroke-width="0" font-size="10" text-anchor="middle" >2B</text>
<circle cx="687" cy="320" r="7.8" stroke="#ff00ff"/>
<text x="687" y="323.5" fill="#b8f070" stroke="#212830" stroke-width="0" font-size="10" text-anchor="middle" >44</text>
<circle cx="453.5" cy="631.5" r="7.8" stroke="#ff00ff"/>
<text x="453.5" y="635.0" fill="#b8f070" stroke="#212830" stroke-width="0" font-size="10" text-anchor="middle" >15</text>
<circle cx="1087.5" cy="538.5" r="7.8" stroke="#ff00ff"/>
<text x="1087.5" y="542.0" fill="#b8f070" stroke="#212830" stroke-width="0" font-size="10" text-anchor="middle" >42</text>
<circle cx="1103.5" cy="539.5" r="7.8" stroke="#ff00ff"/>
<text x="1103.5" y="543.0" fill="#b8f070" stroke="#212830" stroke-width="0" font-size="10" text-anchor="middle" >41</text>
<circle cx="1093.5" cy="555.5" r="7.8" stroke="#ff00ff"/>
<text x="1093.5" y="559.0" fill="#b8f070" stroke="#212830" stroke-width="0" font-size="10" text-anchor="middle" >6</text>
<circle cx="1320.5" cy="538.5" r="7.8" stroke="#ff00ff"/>
<text x="1320.5" y="542.0" fill="#b8f070" stroke="#212830" stroke-width="0" font-size="10" text-anchor="middle" >40</text>
<path d="M1313 548.5 H1328 L1334 562 L1331 568.5 M1313 548.5 L1307 562 L1310 568.5" stroke="#ff00ff" stroke-width="1" fill="none" />
<text x="1320.5" y="560.5" fill="#b8f070" stroke="#212830" stroke-width="0" font-size="10" text-anchor="middle" >5</text>
<text x="665.5" y="339.5" fill="#b8f070" stroke="#212830" stroke-width="0" font-size="9.5" text-anchor="start" textLength="13.5" lengthAdjust="spacingAndGlyphs" >(IN</text>
<text x="685" y="339.5" fill="#b8f070" stroke="#212830" stroke-width="0" font-size="9.5" text-anchor="start" textLength="28.5" lengthAdjust="spacingAndGlyphs" >ATTIC)</text>
<text x="550" y="498.5" fill="#b8f070" stroke="#212830" stroke-width="0.2" font-size="12" text-anchor="start" textLength="22.5" lengthAdjust="spacingAndGlyphs" >BED</text>
<text x="581" y="498.5" fill="#b8f070" stroke="#212830" stroke-width="0.2" font-size="12" text-anchor="start" textLength="33" lengthAdjust="spacingAndGlyphs" >ROOM</text>
<text x="622.5" y="498.5" fill="#b8f070" stroke="#212830" stroke-width="0.2" font-size="12" text-anchor="start" textLength="4.5" lengthAdjust="spacingAndGlyphs" >1</text>
<line x1="550" y1="500.5" x2="629" y2="500.5" stroke="#b8f070" stroke-width="1" />
<text x="546" y="656" fill="#b8f070" stroke="#212830" stroke-width="0.2" font-size="12" text-anchor="start" textLength="21.5" lengthAdjust="spacingAndGlyphs" >BED</text>
<text x="577" y="656" fill="#b8f070" stroke="#212830" stroke-width="0.2" font-size="12" text-anchor="start" textLength="32.5" lengthAdjust="spacingAndGlyphs" >ROOM</text>
<text x="618.5" y="656" fill="#b8f070" stroke="#212830" stroke-width="0.2" font-size="12" text-anchor="start" textLength="6.5" lengthAdjust="spacingAndGlyphs" >2</text>
<line x1="546" y1="657.5" x2="627" y2="657.5" stroke="#b8f070" stroke-width="1" />
<text x="812" y="451" fill="#b8f070" stroke="#212830" stroke-width="0.2" font-size="12.5" text-anchor="start" textLength="30" lengthAdjust="spacingAndGlyphs" >BATH</text>
<text x="852" y="451" fill="#b8f070" stroke="#212830" stroke-width="0.2" font-size="12.5" text-anchor="start" textLength="3.5" lengthAdjust="spacingAndGlyphs" >1</text>
<line x1="812" y1="453.5" x2="857" y2="453.5" stroke="#b8f070" stroke-width="1" />
<text x="894" y="431" fill="#b8f070" stroke="#212830" stroke-width="0.2" font-size="12" text-anchor="start" textLength="54.5" lengthAdjust="spacingAndGlyphs" >LOUNDRY</text>
<line x1="894" y1="432.5" x2="948.5" y2="432.5" stroke="#b8f070" stroke-width="1" />
<text x="1140.5" y="424.5" fill="#b8f070" stroke="#212830" stroke-width="0.2" font-size="12" text-anchor="start" textLength="40.5" lengthAdjust="spacingAndGlyphs" >FAMILY</text>
<text x="1190" y="424.5" fill="#b8f070" stroke="#212830" stroke-width="0.2" font-size="12" text-anchor="start" textLength="17" lengthAdjust="spacingAndGlyphs" >RM</text>
<line x1="1140.5" y1="426.5" x2="1207.5" y2="426.5" stroke="#b8f070" stroke-width="1" />
<clipPath id="ct"><rect x="1170" y="300" width="70" height="10"/></clipPath>
<text x="1175.5" y="307" fill="#ffff00" stroke="#212830" stroke-width="0.2" font-size="11.5" text-anchor="start" textLength="55" lengthAdjust="spacingAndGlyphs" clip-path="url(#ct)">05581.02</text>
<line x1="1138.5" y1="311.5" x2="1263" y2="311.5" stroke="#ffff00" stroke-width="1" />
<text x="1136.5" y="320" fill="#ffff00" stroke="#212830" stroke-width="0.2" font-size="11.5" text-anchor="start" textLength="21.5" lengthAdjust="spacingAndGlyphs" >F.P.</text>
<text x="1166.5" y="320" fill="#ffff00" stroke="#212830" stroke-width="0.2" font-size="11.5" text-anchor="start" textLength="75.0" lengthAdjust="spacingAndGlyphs" >COMBUSTION</text>
<text x="1251" y="320" fill="#ffff00" stroke="#212830" stroke-width="0.2" font-size="11.5" text-anchor="start" textLength="17.5" lengthAdjust="spacingAndGlyphs" >AIR</text>
<text x="1165" y="339.5" fill="#ffff00" stroke="#212830" stroke-width="0.2" font-size="11.5" text-anchor="start" textLength="56.5" lengthAdjust="spacingAndGlyphs" >08450.00</text>
<line x1="1136" y1="342.5" x2="1259" y2="342.5" stroke="#ffff00" stroke-width="1" />
<text x="1147" y="353" fill="#ffff00" stroke="#212830" stroke-width="0.2" font-size="11.5" text-anchor="start" textLength="37" lengthAdjust="spacingAndGlyphs" >GLASS</text>
<text x="1192" y="353" fill="#ffff00" stroke="#212830" stroke-width="0.2" font-size="11.5" text-anchor="start" textLength="20.5" lengthAdjust="spacingAndGlyphs" >F.P.</text>
<text x="1221.5" y="353" fill="#ffff00" stroke="#212830" stroke-width="0.2" font-size="11.5" text-anchor="start" textLength="19.0" lengthAdjust="spacingAndGlyphs" >DR.</text>
<text x="837.5" y="530" fill="#ffff00" stroke="#212830" stroke-width="0" font-size="10.5" text-anchor="start" textLength="13.0" lengthAdjust="spacingAndGlyphs" >UP</text>
<text x="856.5" y="530" fill="#ffff00" stroke="#212830" stroke-width="0" font-size="10.5" text-anchor="start" textLength="5.5" lengthAdjust="spacingAndGlyphs" >2</text>
<text x="867.5" y="530" fill="#ffff00" stroke="#212830" stroke-width="0" font-size="10.5" text-anchor="start" textLength="9.5" lengthAdjust="spacingAndGlyphs" >R.</text>
<text x="883" y="530" fill="#ffff00" stroke="#212830" stroke-width="0" font-size="10.5" text-anchor="start" textLength="7" lengthAdjust="spacingAndGlyphs" >@</text>
<text x="895.5" y="530" fill="#ffff00" stroke="#212830" stroke-width="0" font-size="10.5" text-anchor="start" textLength="10.0" lengthAdjust="spacingAndGlyphs" >6"</text>
<text x="872" y="541.5" fill="#ffff00" stroke="#212830" stroke-width="0" font-size="10.5" text-anchor="start" textLength="3" lengthAdjust="spacingAndGlyphs" >1</text>
<text x="882" y="541.5" fill="#ffff00" stroke="#212830" stroke-width="0" font-size="10.5" text-anchor="start" textLength="7.5" lengthAdjust="spacingAndGlyphs" >T.</text>
<text x="897" y="541.5" fill="#ffff00" stroke="#212830" stroke-width="0" font-size="10.5" text-anchor="start" textLength="6.5" lengthAdjust="spacingAndGlyphs" >@</text>
<text x="910" y="541.5" fill="#ffff00" stroke="#212830" stroke-width="0" font-size="10.5" text-anchor="start" textLength="13.5" lengthAdjust="spacingAndGlyphs" >12"</text>
<line x1="817" y1="531.5" x2="899.5" y2="531.5" stroke="#ffff00" stroke-width="1" />
<path d="M817 531.5 L826 528.5 V534.5 Z" stroke="#ffff00" stroke-width="1" fill="#ffff00" />
<path d="M804 525 V537 M798 531.5 H810" stroke="#ffff00" stroke-width="1" fill="none" />
<text x="746.5" y="604" fill="#ffff00" stroke="#212830" stroke-width="0" font-size="9.5" text-anchor="start" textLength="39" lengthAdjust="spacingAndGlyphs" >2'8"door</text>
<text transform="translate(807,596) rotate(-90)" fill="#ffff00" stroke="#212830" stroke-width="0.2" font-size="10" textLength="65" lengthAdjust="spacingAndGlyphs">SUB FL 588</text>
<path d="M219.5 498 V547.5 H270" stroke="#fff" stroke-width="1" fill="none" />
<path d="M221 481 L227.5 488 L234 481 M227.5 488 V494" stroke="#fff" stroke-width="1" fill="none" />
<path d="M274 534 L287 546 M287 534 L274 546" stroke="#fff" stroke-width="1" fill="none" />
<path d="M1360.5 626.5 V695 M1326 660.5 H1366" stroke="#fff" stroke-width="1" fill="none" />
<rect x="1357.5" y="657.5" width="6" height="6" stroke="#fff"/>
<rect x="1303" y="192" width="10" height="3.5" fill="#e8e8e8" stroke="none"/>
<rect x="1323.5" y="189.5" width="7" height="7" stroke="#e8e8e8" stroke-width="1.6"/><path d="M1326 189 V187.5 H1332.5 V194 H1331" stroke="#e8e8e8" stroke-width="1.2"/>
<path d="M1343.5 188 L1352.5 197 M1352.5 188 L1343.5 197" stroke="#f0f0f0" stroke-width="2.4" fill="none" />
<path d="M8.5 186.5 H6.5 V196.5 H8.5" stroke="#e8e8e8" stroke-width="1.2" fill="none" />
<path d="M1346.5 576 V569 H1350.5 V576" stroke="#e0e0e0" stroke-width="1" fill="none" />
</g></svg>
<svg class="a" style="left:0;top:0" width="1366" height="768" viewBox="0 0 1366 768" font-family="Liberation Sans, sans-serif" >
<defs><linearGradient id="tg" x1="0" y1="0" x2="0" y2="1"><stop offset="0" stop-color="#909090"/><stop offset="1" stop-color="#7e7e7e"/></linearGradient></defs>
<rect x="0" y="0" width="1366" height="24" fill="url(#tg)" stroke="none" stroke-width="1" rx="0" />
<defs><radialGradient id="glow" cx="0.5" cy="0.6" r="0.5"><stop offset="0" stop-color="#b4b4b4" stop-opacity="0.9"/><stop offset="1" stop-color="#8a8a8a" stop-opacity="0"/></radialGradient></defs>
<ellipse cx="617" cy="13" rx="200" ry="18" fill="url(#glow)"/>
<defs><linearGradient id="qg" x1="0" y1="0" x2="0" y2="1"><stop offset="0" stop-color="#707070"/><stop offset="0.2" stop-color="#5e5e5e"/><stop offset="0.5" stop-color="#484848"/><stop offset="1" stop-color="#383838"/></linearGradient></defs>
<rect x="40" y="0" width="394" height="24" fill="url(#qg)" stroke="none" stroke-width="1" rx="0" />
<line x1="40" y1="0.5" x2="434" y2="0.5" stroke="#8a8a8a" stroke-width="1" />
<g transform="translate(-3.5 0)">
<path d="M54.5 6.5 H64.5 L69 10.5 V18.5 H54.5 Z" stroke="#3a3e4a" stroke-width="1.2" fill="#f2f3f6" />
<path d="M64.5 6.5 V10.5 H69" stroke="#3a3e4a" stroke-width="1" fill="none" />
<path d="M78.5 16.5 V7 H83.5 L85 8.5 H90.5 V11" stroke="#3a3e4a" stroke-width="1.1" fill="#dfe2e8" />
<path d="M78.5 16.8 L82.5 11 H93 L89 16.8 Z" stroke="#3a3e4a" stroke-width="1.1" fill="#e6e9ee" />
<rect x="103" y="4.5" width="13" height="13.0" fill="#566078" stroke="#3a3e4a" stroke-width="1" rx="1.5" />
<rect x="105.5" y="5" width="8.0" height="5" fill="#e8eaf0" stroke="none" stroke-width="1" rx="0" />
<rect x="106.5" y="12.5" width="6.0" height="4.5" fill="#eceef2" stroke="none" stroke-width="1" rx="0" />
<rect x="108" y="14" width="1.5" height="2" fill="#566078" stroke="none" stroke-width="1" rx="0" />
<rect x="126" y="4.5" width="13" height="13.0" fill="#566078" stroke="#3a3e4a" stroke-width="1" rx="1.5" />
<rect x="128.5" y="5" width="8.0" height="5" fill="#e8eaf0" stroke="none" stroke-width="1" rx="0" />
<rect x="129.5" y="12.5" width="6.0" height="4.5" fill="#eceef2" stroke="none" stroke-width="1" rx="0" />
<path d="M133.5 17.5 L140.5 11.5" stroke="#e8a020" stroke-width="2.6" fill="none" />
<path d="M132.5 19 L134.2 17" stroke="#222" stroke-width="1.5" fill="none" />
<rect x="150.5" y="9.5" width="15.0" height="7.0" fill="#eceef2" stroke="#3a3e4a" stroke-width="1" rx="1.5" />
<rect x="153.5" y="5" width="9.0" height="4.5" fill="#f4f5f8" stroke="#3a3e4a" stroke-width="1" rx="0" />
<rect x="153.5" y="14" width="9.0" height="4.5" fill="#f8f8fa" stroke="#3a3e4a" stroke-width="1" rx="0" />
<rect x="155" y="15.5" width="6" height="1.0" fill="#8ab0d8" stroke="none" stroke-width="1" rx="0" />
<path d="M174 10.5 L180.5 5.5 V8.5 H184 Q189 8.5 189 13.5 V17.5 H185.5 V14 Q185.5 12 183.5 12 H180.5 V15.5 Z" stroke="#444" stroke-width="0.8" fill="#f4f4f4" />
<path d="M196 11 H201 L198.5 14 Z" stroke="none" stroke-width="1" fill="#999" />
<path d="M225 10.5 L218.5 5.5 V8.5 H215 Q210 8.5 210 13.5 V17.5 H213.5 V14 Q213.5 12 215.5 12 H218.5 V15.5 Z" stroke="none" stroke-width="1" fill="#8e8e8e" />
<path d="M232 11 H237 L234.5 14 Z" stroke="none" stroke-width="1" fill="#888" />
</g>
<defs><linearGradient id="wg" x1="0" y1="0" x2="0" y2="1"><stop offset="0" stop-color="#f4f4f4"/><stop offset="0.5" stop-color="#dcdcdc"/><stop offset="1" stop-color="#bcbcbc"/></linearGradient></defs>
<rect x="239" y="1.5" width="178.5" height="20.5" fill="url(#wg)" stroke="#5a5a5a" stroke-width="1" rx="1" />
<circle cx="250.5" cy="11.5" r="5.2" fill="none" stroke="#444" stroke-width="1.4" stroke-dasharray="2.6 1.5"/>
<circle cx="250.5" cy="11.5" r="3.6" fill="#eee" stroke="#444" stroke-width="1" />
<circle cx="250.5" cy="11.5" r="1.6" fill="#ddd" stroke="#444" stroke-width="1" />
<text x="260" y="16" fill="#000" font-size="12.5" text-anchor="start" textLength="119" lengthAdjust="spacingAndGlyphs" >Drafting &amp; Annotation</text>
<path d="M407 10 H415 L411 14 Z" stroke="none" stroke-width="1" fill="#444" />
<defs><linearGradient id="wb" x1="0" y1="0" x2="0" y2="1"><stop offset="0" stop-color="#6a6a6a"/><stop offset="1" stop-color="#3a3a3a"/></linearGradient></defs>
<rect x="418" y="1.5" width="15.5" height="20.5" fill="url(#wb)" stroke="#2a2a2a" stroke-width="1" rx="0" />
<rect x="422" y="7.5" width="8" height="1.5" fill="#000" stroke="none" stroke-width="1" rx="0" />
<path d="M422 10.5 H430 L426 14.5 Z" stroke="none" stroke-width="1" fill="#000" />
<text x="529" y="17" fill="#000" font-size="12.5" text-anchor="start" textLength="129.5" lengthAdjust="spacingAndGlyphs" >Autodesk AutoCAD 2014</text>
<text x="671.5" y="17" fill="#000" font-size="12.5" text-anchor="start" textLength="32" lengthAdjust="spacingAndGlyphs" >p.dwg</text>
<rect x="799.5" y="0" width="12.5" height="24" fill="#5c5c5c" stroke="#4a4a4a" stroke-width="1" rx="0" />
<path d="M804 8 L808 12 L804 16 Z" stroke="none" stroke-width="1" fill="#000" />
<rect x="813.5" y="2" width="178.5" height="19.5" fill="#f4f4f4" stroke="#5a5a5a" stroke-width="1" rx="0" />
<text x="817" y="17" fill="#8a8a8a" font-size="12" text-anchor="start" textLength="120" lengthAdjust="spacingAndGlyphs" font-style="italic">Type a keyword or phrase</text>
<defs><linearGradient id="dg" x1="0" y1="0" x2="0" y2="1"><stop offset="0" stop-color="#8c8c8c"/><stop offset="0.12" stop-color="#727272"/><stop offset="0.5" stop-color="#585858"/><stop offset="1" stop-color="#3c3c3c"/></linearGradient></defs>
<rect x="992.5" y="1" width="250.5" height="22" fill="url(#dg)" stroke="none" stroke-width="1" rx="0" />
<line x1="992.5" y1="23.5" x2="1243" y2="23.5" stroke="#555" stroke-width="1" />
<path d="M998.5 18.5 V10 L1000 6 H1003.5 L1005 10 V18.5 Z" stroke="#333" stroke-width="0.9" fill="#ececec" />
<path d="M1006.5 18.5 V10 L1008 6 H1011.5 L1013 10 V18.5 Z" stroke="#333" stroke-width="0.9" fill="#ececec" />
<rect x="1004.5" y="10.5" width="2.5" height="3.5" fill="#999" stroke="#333" stroke-width="0.6" rx="0" />
<path d="M998.5 14.5 H1005 M1006.5 14.5 H1013" stroke="#777" stroke-width="0.8" fill="none" />
<circle cx="1029.5" cy="9" r="4" fill="#f0f0f0" stroke="#555" stroke-width="0.8" />
<path d="M1022 19 Q1022 13.5 1029.5 13.5 Q1037 13.5 1037 19 Z" stroke="#555" stroke-width="0.8" fill="#e8e8e8" />
<text x="1042" y="17" fill="#fff" font-size="13" text-anchor="start" textLength="36.5" lengthAdjust="spacingAndGlyphs" >Sign In</text>
<path d="M1127 11 H1133 L1130 14.5 Z" stroke="none" stroke-width="1" fill="#999" />
<text x="1149" y="18" fill="#2a4a9e" font-size="17.5" text-anchor="middle" textLength="13.5" lengthAdjust="spacingAndGlyphs" font-weight="bold" stroke="#eef0fa" stroke-width="1.6" paint-order="stroke">X</text>
<path d="M1173 6.5 L1166.5 16.5 H1179.5 Z" stroke="#eef0fa" stroke-width="4.6" fill="none" stroke-linejoin="round"/>
<path d="M1173 6.5 L1166.5 16.5 H1179.5 Z" stroke="#2a4a9e" stroke-width="2" fill="none" stroke-linejoin="round"/>
<circle cx="1173" cy="6.3" r="2.1" fill="#eef0fa" stroke="#2a4a9e" stroke-width="0.9" />
<circle cx="1166.7" cy="16.5" r="2.1" fill="#eef0fa" stroke="#2a4a9e" stroke-width="0.9" />
<circle cx="1179.3" cy="16.5" r="2.1" fill="#eef0fa" stroke="#2a4a9e" stroke-width="0.9" />
<path d="M1185.5 11 H1191.5 L1188.5 14.5 Z" stroke="none" stroke-width="1" fill="#999" />
<line x1="1201.5" y1="3" x2="1201.5" y2="21" stroke="#777" stroke-width="1" />
<circle cx="1219.5" cy="12" r="7.5" fill="#f4f4f8" stroke="#333" stroke-width="1.2" />
<text x="1219.5" y="16.5" fill="#1a3a9a" font-size="13" text-anchor="middle" font-weight="bold">?</text>
<path d="M1233 11 H1239 L1236 14.5 Z" stroke="none" stroke-width="1" fill="#999" />
<defs><linearGradient id="wc" x1="0" y1="0" x2="0" y2="1"><stop offset="0" stop-color="#9e9e9e"/><stop offset="1" stop-color="#8c8c8c"/></linearGradient></defs>
<path d="M1260.5 0 V15 Q1260.5 19 1264.5 19 H1358 Q1362 19 1362 15 V0 Z" stroke="#5e5e5e" stroke-width="1" fill="url(#wc)" />
<line x1="1288.5" y1="0" x2="1288.5" y2="19" stroke="#666" stroke-width="1" />
<line x1="1315.5" y1="0" x2="1315.5" y2="19" stroke="#666" stroke-width="1" />
<rect x="1267.5" y="9.5" width="13.0" height="4.0" fill="#f4f4f4" stroke="#555" stroke-width="1" rx="1" />
<rect x="1294.5" y="6.5" width="9.0" height="8.0" fill="none" stroke="#555" stroke-width="3" rx="0" />
<rect x="1294.5" y="6.5" width="9.0" height="8.0" fill="none" stroke="#f4f4f4" stroke-width="1.4" rx="0" />
<path d="M1298 6 V3.5 H1307 V11.5 H1304.5" stroke="#555" stroke-width="3" fill="none" />
<path d="M1298 6 V3.5 H1307 V11.5 H1304.5" stroke="#f4f4f4" stroke-width="1.4" fill="none" />
<path d="M1334.5 4.5 L1344.5 12 M1344.5 4.5 L1334.5 12" stroke="#555" stroke-width="4.2" fill="none" />
<path d="M1334.5 4.5 L1344.5 12 M1344.5 4.5 L1334.5 12" stroke="#f6f6f6" stroke-width="2.6" fill="none" />
<rect x="0" y="24" width="1366" height="20" fill="#3d3d3d" stroke="none" stroke-width="1" rx="0" />
<rect x="41" y="24" width="1325" height="1" fill="#2c2c2c" stroke="none" stroke-width="1" rx="0" />
<defs><linearGradient id="hm" x1="0" y1="0" x2="0" y2="1"><stop offset="0" stop-color="#fafafa"/><stop offset="0.5" stop-color="#eaeaea"/><stop offset="1" stop-color="#d8d8d8"/></linearGradient></defs>
<path d="M46 44 V29 Q46 27 48 27 H95 Q97 27 97 29 V44 Z" stroke="none" stroke-width="0" fill="url(#hm)" />
<text x="55.5" y="38.5" fill="#000" font-size="12.5" text-anchor="start" textLength="32.5" lengthAdjust="spacingAndGlyphs" >Home</text>
<text x="107.5" y="38.5" fill="#fff" font-size="12.5" text-anchor="start" textLength="29" lengthAdjust="spacingAndGlyphs" >Insert</text>
<text x="157.5" y="38.5" fill="#fff" font-size="12.5" text-anchor="start" textLength="48.5" lengthAdjust="spacingAndGlyphs" >Annotate</text>
<text x="226" y="38.5" fill="#fff" font-size="12.5" text-anchor="start" textLength="35.5" lengthAdjust="spacingAndGlyphs" >Layout</text>
<text x="282.5" y="38.5" fill="#fff" font-size="12.5" text-anchor="start" textLength="56" lengthAdjust="spacingAndGlyphs" >Parametric</text>
<text x="359" y="38.5" fill="#fff" font-size="12.5" text-anchor="start" textLength="24.5" lengthAdjust="spacingAndGlyphs" >View</text>
<text x="404" y="38.5" fill="#fff" font-size="12.5" text-anchor="start" textLength="42.5" lengthAdjust="spacingAndGlyphs" >Manage</text>
<text x="467.5" y="38.5" fill="#fff" font-size="12.5" text-anchor="start" textLength="36.5" lengthAdjust="spacingAndGlyphs" >Output</text>
<text x="526" y="38.5" fill="#fff" font-size="12.5" text-anchor="start" textLength="42.5" lengthAdjust="spacingAndGlyphs" >Plug-ins</text>
<text x="589" y="38.5" fill="#fff" font-size="12.5" text-anchor="start" textLength="70" lengthAdjust="spacingAndGlyphs" >Autodesk 360</text>
<text x="680" y="38.5" fill="#fff" font-size="12.5" text-anchor="start" textLength="75.5" lengthAdjust="spacingAndGlyphs" >Featured Apps</text>
<text x="776.5" y="38.5" fill="#fff" font-size="12.5" text-anchor="start" textLength="69" lengthAdjust="spacingAndGlyphs" >Express Tools</text>
<rect x="878" y="31" width="13.5" height="6.5" fill="#e8e8e8" stroke="none" stroke-width="1" rx="2" />
<path d="M882 35.5 L884.7 32.5 L887.5 35.5 Z" stroke="none" stroke-width="1" fill="#333" />
<path d="M895.5 33.5 H900.5 L898 36.5 Z" stroke="none" stroke-width="1" fill="#ddd" />
<defs><linearGradient id="ab" x1="0" y1="0" x2="0" y2="1"><stop offset="0" stop-color="#c6c6c6"/><stop offset="0.5" stop-color="#a4a4a4"/><stop offset="1" stop-color="#8a8a8a"/></linearGradient></defs>
<rect x="0" y="0" width="41" height="41" fill="#1e1e1e" stroke="none" stroke-width="1" rx="0" />
<rect x="1" y="0" width="39" height="39.5" fill="url(#ab)" stroke="none" stroke-width="1" rx="0" />
<path d="M16.7 4 L28.2 25 L5 25 Z" stroke="none" stroke-width="1" fill="#d8341e" />
<path d="M16.7 4 L28.2 25 L22 25 L16.7 12 Z" stroke="none" stroke-width="1" fill="#c42a18" />
<path d="M5 25 L9.5 20.5 L22.5 15 L28.2 25 Z" stroke="none" stroke-width="1" fill="#7c120a" />
<path d="M9.5 20.5 L13.5 13.5 L20 11 L22.5 15 Z" stroke="none" stroke-width="1" fill="#b02014" />
<path d="M5.6 25 H11.8 L11.2 29 L8.8 29.6 Z" stroke="none" stroke-width="1" fill="#dc3020" />
<path d="M27.6 25 H21 L21.7 29 L24.5 29.6 Z" stroke="none" stroke-width="1" fill="#dc3020" />
<path d="M11.8 25 Q16.5 22.5 21 25 Z" stroke="none" stroke-width="1" fill="#9a9a9a" />
<path d="M31 18.3 H38 L34.5 22.6 Z" stroke="none" stroke-width="1" fill="#34343e" />
<rect x="0" y="44" width="1332" height="99" fill="#fcfcfc" stroke="none" stroke-width="1" rx="0" />
<rect x="0" y="124.5" width="1332" height="17.5" fill="#eeeeee" stroke="none" stroke-width="1" rx="0" />
<line x1="0" y1="124.5" x2="1332" y2="124.5" stroke="#dadada" stroke-width="1" />
<line x1="0" y1="141.5" x2="1332" y2="141.5" stroke="#d6d6d6" stroke-width="1" />
<line x1="0" y1="142.5" x2="1332" y2="142.5" stroke="#ffffff" stroke-width="1" />
<defs><linearGradient id="rr" x1="0" y1="0" x2="1" y2="0"><stop offset="0" stop-color="#cacaca"/><stop offset="1" stop-color="#8a8a8a"/></linearGradient></defs>
<rect x="1332" y="44" width="34" height="99" fill="url(#rr)" stroke="none" stroke-width="1" rx="0" />
<rect x="0" y="44" width="1" height="99" fill="#555" stroke="none" stroke-width="1" rx="0" />
<line x1="689.5" y1="47" x2="689.5" y2="142" stroke="#9c9c9c" stroke-width="1" />
<line x1="690.5" y1="47" x2="690.5" y2="142" stroke="#fff" stroke-width="1" />
<line x1="817" y1="47" x2="817" y2="142" stroke="#9c9c9c" stroke-width="1" />
<line x1="818" y1="47" x2="818" y2="142" stroke="#fff" stroke-width="1" />
<line x1="924.5" y1="47" x2="924.5" y2="142" stroke="#9c9c9c" stroke-width="1" />
<line x1="925.5" y1="47" x2="925.5" y2="142" stroke="#fff" stroke-width="1" />
<line x1="1085.5" y1="47" x2="1085.5" y2="142" stroke="#9c9c9c" stroke-width="1" />
<line x1="1086.5" y1="47" x2="1086.5" y2="142" stroke="#fff" stroke-width="1" />
<line x1="1154.5" y1="47" x2="1154.5" y2="142" stroke="#9c9c9c" stroke-width="1" />
<line x1="1155.5" y1="47" x2="1155.5" y2="142" stroke="#fff" stroke-width="1" />
<line x1="1251.5" y1="47" x2="1251.5" y2="142" stroke="#9c9c9c" stroke-width="1" />
<line x1="1252.5" y1="47" x2="1252.5" y2="142" stroke="#fff" stroke-width="1" />
<rect x="663.0" y="51.0" width="22.0" height="19.5" fill="#f5f5f5" stroke="#dedede" stroke-width="1" rx="0" />
<path d="M666.5 61 L671 55.5 H680 L675.5 61 Z" stroke="#444" stroke-width="1" fill="#fff" />
<path d="M678.5 57.5 a2.6 2.6 0 0 1 2.6 2.6 c0 1.8 -1.2 2 -1.2 3.6 h-2.8 c0 -1.6 -1.2 -1.8 -1.2 -3.6 a2.6 2.6 0 0 1 2.6 -2.6 Z" stroke="#2a5aa8" stroke-width="1" fill="#bfe0ff" />
<rect x="677.2" y="64" width="2.8" height="2.5" fill="#334" stroke="none" stroke-width="1" rx="0" />
<rect x="655.5" y="75.0" width="29.5" height="19.5" fill="#f5f5f5" stroke="#dedede" stroke-width="1" rx="0" />
<path d="M675.5 84.0 H682.5 L679 88.0 Z" stroke="none" stroke-width="1" fill="#333" />
<rect x="655.5" y="99.0" width="29.5" height="19.5" fill="#f5f5f5" stroke="#dedede" stroke-width="1" rx="0" />
<path d="M675.5 108.0 H682.5 L679 112.0 Z" stroke="none" stroke-width="1" fill="#333" />
<rect x="655" y="50.5" width="6" height="20.5" fill="#f5f5f5" stroke="#dedede" stroke-width="1" rx="0" />
<text x="700.5" y="82" fill="#3a3a42" font-size="39" text-anchor="start" textLength="26" lengthAdjust="spacingAndGlyphs" >A</text>
<text x="703" y="98.5" fill="#1a1a1a" font-size="12.5" text-anchor="start" textLength="22" lengthAdjust="spacingAndGlyphs" >Text</text>
<path d="M711.0 105 H716.0 L713.5 108 Z" stroke="none" stroke-width="1" fill="#333" />
<path d="M741.5 55 V68 M757.5 55 V68 M741.5 61.5 H757.5" stroke="#333" stroke-width="1.2" fill="none" />
<text x="763" y="65" fill="#1a1a1a" font-size="12.5" text-anchor="start" textLength="31" lengthAdjust="spacingAndGlyphs" >Linear</text>
<path d="M802.0 60.5 H807.0 L804.5 63.5 Z" stroke="none" stroke-width="1" fill="#333" />
<path d="M742 91 Q744 82 752 81.5" stroke="#333" stroke-width="1.2" fill="none" />
<circle cx="755" cy="80.5" r="2.8" fill="#fff" stroke="#333" stroke-width="1" />
<path d="M741 92.5 L742 86.5 L746 90 Z" stroke="none" stroke-width="1" fill="#333" />
<text x="763" y="89" fill="#1a1a1a" font-size="12.5" text-anchor="start" textLength="35" lengthAdjust="spacingAndGlyphs" >Leader</text>
<path d="M804.0 84.5 H809.0 L806.5 87.5 Z" stroke="none" stroke-width="1" fill="#333" />
<rect x="741.5" y="101.5" width="16.0" height="15.0" fill="#f4f4f4" stroke="#334" stroke-width="1.2" rx="1" />
<rect x="742" y="102" width="15" height="3.5" fill="#8a98b0" stroke="none" stroke-width="1" rx="0" />
<path d="M741.5 109.5 H757.5 M741.5 113 H757.5 M747 105.5 V116.5 M752 105.5 V116.5" stroke="#99a" stroke-width="0.8" fill="none" />
<text x="763" y="113" fill="#1a1a1a" font-size="12.5" text-anchor="start" textLength="28" lengthAdjust="spacingAndGlyphs" >Table</text>
<text x="716.5" y="137" fill="#1a1a1a" font-size="12.5" text-anchor="start" textLength="59" lengthAdjust="spacingAndGlyphs" >Annotation</text>
<path d="M782.5 132.0 H789.5 L786 136.0 Z" stroke="none" stroke-width="1" fill="#333" />
<path d="M837 53.5 H849 L855 59 V76 H837 Z" stroke="#555" stroke-width="1" fill="#e8eaf0" />
<rect x="825.5" y="63.5" width="19.0" height="14.0" fill="#eef0f4" stroke="#555" stroke-width="1" rx="0" />
<circle cx="846" cy="73.5" r="7" fill="#f0f0f4" stroke="#555" stroke-width="1" />
<rect x="824" y="75.5" width="3" height="3.0" fill="#fff" stroke="#333" stroke-width="1" rx="0" />
<path d="M846 66.5 V73.5 H853" stroke="#888" stroke-width="0.8" fill="none" />
<text x="824.5" y="98.5" fill="#1a1a1a" font-size="12.5" text-anchor="start" textLength="28.5" lengthAdjust="spacingAndGlyphs" >Insert</text>
<rect x="864.5" y="56.5" width="10.0" height="7.5" fill="#f0f0f0" stroke="#444" stroke-width="1" rx="0" />
<circle cx="875" cy="65" r="2.8" fill="#f0f0f0" stroke="#555" stroke-width="1" />
<rect x="863" y="63" width="2.5" height="2.5" fill="#fff" stroke="#333" stroke-width="0.8" rx="0" />
<text x="883" y="65" fill="#1a1a1a" font-size="12.5" text-anchor="start" textLength="34.5" lengthAdjust="spacingAndGlyphs" >Create</text>
<rect x="864.5" y="82" width="8.0" height="7" fill="#f0f0f0" stroke="#444" stroke-width="1" rx="0" />
<circle cx="873.5" cy="90" r="2.8" fill="#f0f0f0" stroke="#555" stroke-width="1" />
<rect x="863" y="88" width="2.5" height="2.5" fill="#fff" stroke="#333" stroke-width="0.8" rx="0" />
<path d="M875 77.5 L871.5 82.5 H874.5 L872 87 L878 81 H875 L877 77.5 Z" stroke="none" stroke-width="1" fill="#f08a00" />
<text x="883" y="89" fill="#1a1a1a" font-size="12.5" text-anchor="start" textLength="20" lengthAdjust="spacingAndGlyphs" >Edit</text>
<rect x="858.5" y="99.0" width="20.0" height="19.5" fill="#f5f5f5" stroke="#dedede" stroke-width="1" rx="0" />
<rect x="879.5" y="99.0" width="14.0" height="19.5" fill="#f5f5f5" stroke="#dedede" stroke-width="1" rx="0" />
<path d="M863 102.5 L864.5 106.5 L870 113 L875 108 L868.5 104.5 Z" stroke="#333" stroke-width="1.1" fill="#fff" />
<path d="M869 109 L874.5 103.5" stroke="#e09020" stroke-width="2" fill="none" />
<path d="M884.0 108 H889.0 L886.5 111 Z" stroke="none" stroke-width="1" fill="#333" />
<text x="849.5" y="137" fill="#1a1a1a" font-size="12.5" text-anchor="start" textLength="29" lengthAdjust="spacingAndGlyphs" >Block</text>
<path d="M883.5 132.0 H890.5 L887 136.0 Z" stroke="none" stroke-width="1" fill="#333" />
<circle cx="937" cy="61.5" r="7.8" fill="#ccc" stroke="#666" stroke-width="1" />
<path d="M937 61.5 L937.0 54.2 A7.3 7.3 0 0 1 943.3 57.9 Z" stroke="none" stroke-width="1" fill="#e03030" />
<path d="M937 61.5 L943.3 57.9 A7.3 7.3 0 0 1 943.3 65.2 Z" stroke="none" stroke-width="1" fill="#e0d030" />
<path d="M937 61.5 L943.3 65.2 A7.3 7.3 0 0 1 937.0 68.8 Z" stroke="none" stroke-width="1" fill="#40b040" />
<path d="M937 61.5 L937.0 68.8 A7.3 7.3 0 0 1 930.7 65.2 Z" stroke="none" stroke-width="1" fill="#30b0d0" />
<path d="M937 61.5 L930.7 65.2 A7.3 7.3 0 0 1 930.7 57.9 Z" stroke="none" stroke-width="1" fill="#3050d0" />
<path d="M937 61.5 L930.7 57.9 A7.3 7.3 0 0 1 937.0 54.2 Z" stroke="none" stroke-width="1" fill="#c040c0" />
<defs><linearGradient id="ddg" x1="0" y1="0" x2="0" y2="1"><stop offset="0" stop-color="#fbfbfb"/><stop offset="1" stop-color="#eeeeee"/></linearGradient></defs>
<rect x="948.5" y="51.5" width="135.5" height="19.5" fill="url(#ddg)" stroke="#dadada" stroke-width="1" rx="0" />
<rect x="948.5" y="75.5" width="135.5" height="19.5" fill="url(#ddg)" stroke="#dadada" stroke-width="1" rx="0" />
<rect x="948.5" y="99.5" width="135.5" height="19.5" fill="url(#ddg)" stroke="#dadada" stroke-width="1" rx="0" />
<rect x="951.5" y="53.5" width="15.5" height="15.5" fill="#a34c00" stroke="#000" stroke-width="1.4" rx="0" />
<text x="969" y="66" fill="#1a1a1a" font-size="12.5" text-anchor="start" textLength="41" lengthAdjust="spacingAndGlyphs" >ByLayer</text>
<path d="M1072.0 60.0 H1079.0 L1075.5 64.0 Z" stroke="none" stroke-width="1" fill="#333" />
<rect x="929.5" y="77.0" width="15.5" height="1.5" fill="#222" stroke="none" stroke-width="1" rx="0" />
<rect x="929.5" y="81.5" width="15.5" height="2.0" fill="#222" stroke="none" stroke-width="1" rx="0" />
<rect x="929.5" y="86.0" width="15.5" height="2.7" fill="#222" stroke="none" stroke-width="1" rx="0" />
<rect x="929.5" y="90.5" width="15.5" height="3.5" fill="#222" stroke="none" stroke-width="1" rx="0" />
<line x1="953" y1="85.5" x2="1015.5" y2="85.5" stroke="#000" stroke-width="1" />
<text x="1017" y="90" fill="#1a1a1a" font-size="12.5" text-anchor="start" textLength="41" lengthAdjust="spacingAndGlyphs" >ByLayer</text>
<path d="M1073.5 84.0 H1080.5 L1077 88.0 Z" stroke="none" stroke-width="1" fill="#333" />
<line x1="929.5" y1="103.5" x2="945" y2="103.5" stroke="#222" stroke-width="1" stroke-dasharray="1 1" />
<line x1="929.5" y1="107.5" x2="945" y2="107.5" stroke="#222" stroke-width="1" stroke-dasharray="2 1" />
<line x1="929.5" y1="111.5" x2="945" y2="111.5" stroke="#222" stroke-width="1" stroke-dasharray="3 2" />
<line x1="929.5" y1="115.5" x2="945" y2="115.5" stroke="#222" stroke-width="1" stroke-dasharray="5 2" />
<line x1="957" y1="109.5" x2="1015.5" y2="109.5" stroke="#000" stroke-width="1" />
<text x="1017" y="114" fill="#1a1a1a" font-size="12.5" text-anchor="start" textLength="41" lengthAdjust="spacingAndGlyphs" >ByLayer</text>
<path d="M1073.5 108.0 H1080.5 L1077 112.0 Z" stroke="none" stroke-width="1" fill="#333" />
<text x="966.5" y="137" fill="#1a1a1a" font-size="12.5" text-anchor="start" textLength="53" lengthAdjust="spacingAndGlyphs" >Properties</text>
<path d="M1025.5 132.0 H1032.5 L1029 136.0 Z" stroke="none" stroke-width="1" fill="#333" />
<path d="M1076 131.5 L1080 135.5 M1080 132 V135.5 H1076.5" stroke="#444" stroke-width="1" fill="none" />
<rect x="1092.5" y="52.5" width="18.5" height="30.5" fill="none" stroke="#000" stroke-width="1" rx="0" stroke-dasharray="2 1.5"/>
<rect x="1097" y="57.5" width="11" height="9.0" fill="#e8d870" stroke="#555" stroke-width="1" rx="0" />
<circle cx="1101.5" cy="76" r="5" fill="#e0e0e0" stroke="#333" stroke-width="1" />
<path d="M1115 55 V72 M1106.5 63.5 H1123.5 M1109 57.5 L1121 69.5 M1121 57.5 L1109 69.5" stroke="#4aa8e8" stroke-width="1.4" fill="none" />
<circle cx="1115" cy="63.5" r="2.2" fill="#fff" stroke="none" stroke-width="1" />
<text x="1093" y="98.5" fill="#1a1a1a" font-size="12.5" text-anchor="start" textLength="31.5" lengthAdjust="spacingAndGlyphs" >Group</text>
<rect x="1130.0" y="51.0" width="21.5" height="19.5" fill="#f5f5f5" stroke="#dedede" stroke-width="1" rx="0" />
<rect x="1130.0" y="75.0" width="21.5" height="19.5" fill="#f5f5f5" stroke="#dedede" stroke-width="1" rx="0" />
<rect x="1130.0" y="99.0" width="21.5" height="19.5" fill="#cbe3f8" stroke="#2f7fd0" stroke-width="1" rx="0" />
<rect x="1134.5" y="55" width="4.5" height="4.5" fill="#e8d870" stroke="#333" stroke-width="1" rx="0" />
<circle cx="1137" cy="64.5" r="2.3" fill="#e0e0e0" stroke="#333" stroke-width="1" />
<path d="M1140 66 L1148 56" stroke="#e09020" stroke-width="2.6" fill="none" />
<rect x="1133" y="53.5" width="8" height="14.5" fill="none" stroke="#000" stroke-width="0.8" rx="0" stroke-dasharray="1 1"/>
<rect x="1134.5" y="79" width="4.5" height="4.5" fill="#fff" stroke="#333" stroke-width="1" rx="0" />
<circle cx="1137" cy="88.5" r="2.3" fill="#a8d0f0" stroke="#2a5aa8" stroke-width="1" />
<rect x="1133" y="77.5" width="8" height="14.5" fill="none" stroke="#000" stroke-width="0.8" rx="0" stroke-dasharray="1 1"/>
<path d="M1143 82 H1149 M1146 79 V85 M1143 88.5 H1149" stroke="#222" stroke-width="1.2" fill="none" />
<rect x="1134.5" y="103" width="4.5" height="4.5" fill="#e8d870" stroke="#333" stroke-width="1" rx="0" />
<circle cx="1137" cy="112.5" r="2.3" fill="#e0e0e0" stroke="#333" stroke-width="1" />
<rect x="1133" y="101.5" width="8" height="14.5" fill="none" stroke="#000" stroke-width="0.8" rx="0" stroke-dasharray="1 1"/>
<path d="M1142 104 V115 L1144.5 112.5 L1146.5 116.5 L1148 115.7 L1146 112 H1149.5 Z" stroke="#000" stroke-width="0.8" fill="#fff" />
<text x="1095.5" y="137" fill="#1a1a1a" font-size="12.5" text-anchor="start" textLength="37.5" lengthAdjust="spacingAndGlyphs" >Groups</text>
<path d="M1138.5 132.0 H1145.5 L1142 136.0 Z" stroke="none" stroke-width="1" fill="#333" />
<path d="M1177 60 V68 M1205 60 V68 M1177 64 H1205 M1177 64 L1180.5 62 V66 Z M1205 64 L1201.5 62 V66 Z" stroke="#333" stroke-width="1" fill="none" />
<rect x="1177" y="71.5" width="28.5" height="5.0" fill="#f0c830" stroke="#b08a10" stroke-width="1" rx="1" />
<path d="M1180 71.5 v2 M1183 71.5 v2 M1186 71.5 v2 M1189 71.5 v2 M1192 71.5 v2 M1195 71.5 v2 M1198 71.5 v2 M1201 71.5 v2" stroke="#8a6a10" stroke-width="0.7" fill="none" />
<text x="1169" y="98.5" fill="#1a1a1a" font-size="12.5" text-anchor="start" textLength="44.5" lengthAdjust="spacingAndGlyphs" >Measure</text>
<path d="M1188.5 105 H1193.5 L1191 108 Z" stroke="none" stroke-width="1" fill="#333" />
<rect x="1227.0" y="51.0" width="21.5" height="19.5" fill="#f5f5f5" stroke="#dedede" stroke-width="1" rx="0" />
<rect x="1227.0" y="75.0" width="21.5" height="19.5" fill="#f5f5f5" stroke="#dedede" stroke-width="1" rx="0" />
<rect x="1227.0" y="99.0" width="21.5" height="19.5" fill="#f5f5f5" stroke="#dedede" stroke-width="1" rx="0" />
<rect x="1230.5" y="54.5" width="7.5" height="12.0" fill="#b8d8a0" stroke="#2a7a1a" stroke-width="1.2" rx="0" />
<path d="M1236 57 V67 L1238.2 65 L1240 68.5 L1241.5 67.8 L1239.7 64.4 H1242.5 Z" stroke="#000" stroke-width="0.8" fill="#fff" />
<path d="M1245 54 L1241.5 58.5 H1244 L1242 62 L1247 57 H1244.5 L1246.5 54 Z" stroke="none" stroke-width="1" fill="#f08a00" />
<rect x="1235.5" y="78.5" width="6.0" height="5.5" fill="#b8d8a0" stroke="#2a7a1a" stroke-width="1.2" rx="0" />
<path d="M1236 88.5 A3.5 3.5 0 1 1 1234.5 82" stroke="#555" stroke-width="1.2" fill="none" />
<path d="M1239.5 82 V92 L1241.7 90 L1243.5 93.5 L1245 92.8 L1243.2 89.4 H1246 Z" stroke="#000" stroke-width="0.8" fill="#fff" />
<rect x="1233" y="102.5" width="9.5" height="13.0" fill="#f4f4f4" stroke="#334" stroke-width="1.2" rx="1" />
<rect x="1234.5" y="104" width="6.5" height="2.5" fill="#889" stroke="none" stroke-width="1" rx="0" />
<rect x="1235" y="108.5" width="1.2" height="1.2" fill="#445" stroke="none" stroke-width="1" rx="0" />
<rect x="1237.3" y="108.5" width="1.2" height="1.2" fill="#445" stroke="none" stroke-width="1" rx="0" />
<rect x="1239.6" y="108.5" width="1.2" height="1.2" fill="#445" stroke="none" stroke-width="1" rx="0" />
<rect x="1235" y="110.8" width="1.2" height="1.2" fill="#445" stroke="none" stroke-width="1" rx="0" />
<rect x="1237.3" y="110.8" width="1.2" height="1.2" fill="#445" stroke="none" stroke-width="1" rx="0" />
<rect x="1239.6" y="110.8" width="1.2" height="1.2" fill="#445" stroke="none" stroke-width="1" rx="0" />
<rect x="1235" y="113.1" width="1.2" height="1.2" fill="#445" stroke="none" stroke-width="1" rx="0" />
<rect x="1237.3" y="113.1" width="1.2" height="1.2" fill="#445" stroke="none" stroke-width="1" rx="0" />
<rect x="1239.6" y="113.1" width="1.2" height="1.2" fill="#445" stroke="none" stroke-width="1" rx="0" />
<text x="1177" y="137" fill="#1a1a1a" font-size="12.5" text-anchor="start" textLength="38.5" lengthAdjust="spacingAndGlyphs" >Utilities</text>
<path d="M1222.5 132.0 H1229.5 L1226 136.0 Z" stroke="none" stroke-width="1" fill="#333" />
<defs><linearGradient id="pg" x1="0" y1="0" x2="1" y2="0"><stop offset="0" stop-color="#b8b0a0"/><stop offset="1" stop-color="#8a8070"/></linearGradient></defs>
<rect x="1268.5" y="55" width="21.0" height="23.5" fill="url(#pg)" stroke="#555" stroke-width="1" rx="1.5" />
<rect x="1274" y="52.5" width="10" height="4.0" fill="#ddd" stroke="#555" stroke-width="1" rx="1.5" />
<path d="M1275.5 61.5 H1288 L1294.5 67.5 V82.5 H1275.5 Z" stroke="#555" stroke-width="1" fill="#eceef4" />
<path d="M1288 61.5 V67.5 H1294.5" stroke="#555" stroke-width="1" fill="none" />
<text x="1266.5" y="98.5" fill="#1a1a1a" font-size="12.5" text-anchor="start" textLength="27.5" lengthAdjust="spacingAndGlyphs" >Paste</text>
<path d="M1277.5 105 H1282.5 L1280 108 Z" stroke="none" stroke-width="1" fill="#333" />
<rect x="1307.0" y="51.0" width="21.5" height="19.5" fill="#f5f5f5" stroke="#dedede" stroke-width="1" rx="0" />
<rect x="1307.0" y="75.0" width="21.5" height="19.5" fill="#f5f5f5" stroke="#dedede" stroke-width="1" rx="0" />
<rect x="1307.0" y="99.0" width="21.5" height="19.5" fill="#f5f5f5" stroke="#dedede" stroke-width="1" rx="0" />
<path d="M1312 53.5 L1322.5 66 M1324 53.5 L1313.5 66" stroke="#333" stroke-width="1.6" fill="none" />
<circle cx="1312.5" cy="66" r="2" fill="none" stroke="#333" stroke-width="1.2" />
<circle cx="1323.5" cy="66" r="2" fill="none" stroke="#333" stroke-width="1.2" />
<path d="M1311 88 V78 H1317" stroke="#333" stroke-width="1.2" fill="none" />
<path d="M1315 80.5 H1321.5 L1325 84 V92.5 H1315 Z" stroke="#333" stroke-width="1.2" fill="#f4f4f4" />
<rect x="1310.5" y="102" width="10.0" height="13.5" fill="#f4f4f4" stroke="#334" stroke-width="1.2" rx="0" />
<rect x="1312" y="103.5" width="4.5" height="4.5" fill="#2a58a8" stroke="none" stroke-width="1" rx="0" />
<rect x="1317.5" y="103.5" width="2.0" height="3.5" fill="#99a" stroke="none" stroke-width="1" rx="0" />
<path d="M1316 111 L1320 115 L1326.5 109.5 L1324 107.5 Z" stroke="none" stroke-width="1" fill="#c86a10" />
<path d="M1324 108 L1327.5 105" stroke="#8a4a08" stroke-width="1.4" fill="none" />
<text x="1266.5" y="137" fill="#1a1a1a" font-size="12.5" text-anchor="start" textLength="51.5" lengthAdjust="spacingAndGlyphs" >Clipboard</text>
<defs><linearGradient id="bd" x1="0" y1="0" x2="0" y2="1"><stop offset="0" stop-color="#a9a9a9"/><stop offset="1" stop-color="#949494"/></linearGradient></defs>
<rect x="0" y="143" width="1366" height="27" fill="url(#bd)" stroke="none" stroke-width="1" rx="0" />
<rect x="0" y="170" width="1366" height="1" fill="#a8a8a8" stroke="none" stroke-width="1" rx="0" />
<rect x="0" y="171" width="1366" height="4" fill="#6a6a6a" stroke="none" stroke-width="1" rx="0" />
<rect x="0" y="175" width="1366" height="1" fill="#a2a2a2" stroke="none" stroke-width="1" rx="0" />
<rect x="0" y="176" width="1366" height="1" fill="#8a8a8a" stroke="none" stroke-width="1" rx="0" />
<rect x="0" y="177" width="1366" height="1" fill="#6e6e6e" stroke="none" stroke-width="1" rx="0" />
<line x1="0" y1="143.5" x2="1366" y2="143.5" stroke="#c4c4c4" stroke-width="1" />
<rect x="1041" y="177" width="196" height="1" fill="#e4e4e4" stroke="none" stroke-width="1" rx="0" />
<rect x="1062" y="177" width="58" height="1" fill="#1aa9e8" stroke="none" stroke-width="1" rx="0" />
</svg>
<svg class="a" style="left:0;top:0" width="1366" height="768" viewBox="0 0 1366 768" font-family="Liberation Sans, sans-serif" >
<rect x="9" y="43" width="649.5" height="347.5" fill="#4a4a4a" stroke="none" stroke-width="1" rx="0" />
<rect x="10" y="44" width="647" height="345.5" fill="#c6c6c6" stroke="none" stroke-width="1" rx="0" />
<rect x="655" y="44" width="2.5" height="345.5" fill="#7a7a7a" stroke="none" stroke-width="1" rx="0" />
<rect x="657.5" y="44" width="1.5" height="346" fill="#d4d4d4" stroke="none" stroke-width="1" rx="0" />
<rect x="10" y="387.5" width="647" height="2.0" fill="#8a8a8a" stroke="none" stroke-width="1" rx="0" />
<rect x="31" y="45.5" width="624.5" height="342.0" fill="#f0f0f0" stroke="#707070" stroke-width="1" rx="3" />
<rect x="32" y="46.5" width="622.5" height="4.5" fill="#f6f6f6" stroke="none" stroke-width="1" rx="0" />
<path d="M19 50 L27 56.5 M27 50 L19 56.5" stroke="#000" stroke-width="2.6" fill="none" />
<path d="M14.5 66 V77" stroke="#000" stroke-width="2" fill="none" />
<path d="M16 71.5 L20.5 67 V76 Z M26 71.5 L21.5 67 V76 Z" stroke="none" stroke-width="1" fill="#000" />
<rect x="16" y="85" width="12" height="10.5" fill="#000" stroke="none" stroke-width="1" rx="0" />
<rect x="21" y="89" width="6" height="2" fill="#c6c6c6" stroke="none" stroke-width="1" rx="0" />
<rect x="21" y="92.5" width="6" height="2.0" fill="#c6c6c6" stroke="none" stroke-width="1" rx="0" />
<rect x="17" y="87.5" width="11" height="0.8" fill="#c6c6c6" stroke="none" stroke-width="1" rx="0" />
<text transform="translate(24.5,362.5) rotate(-90)" font-size="12" fill="#000" textLength="134" lengthAdjust="spacingAndGlyphs">Layer Properties Manager</text>
<path d="M14 378.5 L19 374.5 H28 L23 378.5 Z" stroke="#333" stroke-width="1" fill="#f4f4f4" />
<path d="M14 382.5 L19 378.5 H28 L23 382.5 Z" stroke="#333" stroke-width="1" fill="#f4f4f4" />
<path d="M14 386.5 L19 382.5 H28 L23 386.5 Z" stroke="#333" stroke-width="1" fill="#f4f4f4" />
<line x1="34" y1="51.5" x2="523" y2="51.5" stroke="#9a9a9a" stroke-width="1" />
<rect x="34" y="52" width="489" height="20" fill="#f5f5f5" stroke="none" stroke-width="1" rx="0" />
<line x1="523" y1="52" x2="523" y2="72" stroke="#fff" stroke-width="1" />
<text x="37" y="67" fill="#000" font-size="12.5" text-anchor="start" textLength="98" lengthAdjust="spacingAndGlyphs" >Current layer: door</text>
<rect x="528.5" y="53.5" width="123.5" height="21.5" fill="#fcfcfc" stroke="#d4dae4" stroke-width="1" rx="2" />
<text x="531" y="67.5" fill="#7a7a7a" font-size="12.5" text-anchor="start" textLength="81" lengthAdjust="spacingAndGlyphs" >Search for layer</text>
<circle cx="640.5" cy="62.5" r="4" fill="#e8f0f8" stroke="#8a8a8a" stroke-width="1.3" />
<line x1="643.5" y1="65.5" x2="647.5" y2="69.5" stroke="#444" stroke-width="2.2" />
<path d="M41.5 81.5 H46.5 l1.2 -1.5 l1.2 1.5 h1 M39.5 84.5 H45.5 M38 87.5 H43.5 M37 90.5 H44 M41.5 81.5 L39.5 84.5 M39.5 84.5 L38 87.5 M38 87.5 L37 90.5" stroke="#3a3a3a" stroke-width="1" fill="none" />
<path d="M43.5 86.5 H53 V88 L49.8 91 V94 H46.8 V91 L43.5 88 Z" stroke="#444" stroke-width="1" fill="#d4dce6" />
<path d="M44.5 87.5 H52" stroke="#fff" stroke-width="1" fill="none" />
<rect x="60.5" y="80.5" width="9.5" height="11.5" fill="#fff" stroke="#445" stroke-width="1" rx="0" />
<rect x="62" y="82" width="4" height="4" fill="#2a58a8" stroke="none" stroke-width="1" rx="0" />
<rect x="67" y="82" width="2" height="3" fill="#889" stroke="none" stroke-width="1" rx="0" />
<path d="M66 87 H75.5 L72.5 90.5 V93.5 H69.5 V90.5 Z" stroke="#555" stroke-width="1" fill="#dfe6ee" />
<line x1="82.5" y1="78" x2="82.5" y2="96" stroke="#9a9a9a" stroke-width="1" />
<path d="M91 84 L95 80 H101" stroke="#444" stroke-width="1" fill="none" />
<path d="M91 87.5 L95 83.5 H101" stroke="#444" stroke-width="1" fill="none" />
<path d="M91 91 L95 87 H101" stroke="#444" stroke-width="1" fill="none" />
<rect x="99.5" y="84.5" width="7.0" height="9.0" fill="#fff" stroke="#445" stroke-width="1" rx="0" />
<rect x="101" y="86" width="4" height="2.5" fill="#2a58a8" stroke="none" stroke-width="1" rx="0" />
<line x1="101" y1="91.5" x2="105" y2="91.5" stroke="#445" stroke-width="1" />
<path d="M166 92 L170 86 H180.5 L176.5 92 Z" stroke="#1e5aa8" stroke-width="1" fill="#a8d0f0" />
<circle cx="170.5" cy="83.5" r="2.2" fill="#ffb000" stroke="#e05000" stroke-width="1" />
<path d="M170.5 79.5 V87.5 M166.5 83.5 H174.5 M167.7 80.7 L173.3 86.3 M173.3 80.7 L167.7 86.3" stroke="#e86000" stroke-width="0.8" fill="none" />
<path d="M191 84 H198.5" stroke="#1e5aa8" stroke-width="1.6" fill="none" />
<path d="M193 88 L195 84" stroke="#1e5aa8" stroke-width="1.2" fill="none" />
<rect x="188.5" y="80" width="4.0" height="4" fill="#ffb000" stroke="#e05000" stroke-width="1" rx="0" />
<circle cx="199" cy="89.5" r="4" fill="#e8f2ff" stroke="#1e5aa8" stroke-width="1" />
<path d="M199 85.5 V93.5 M195.5 87.5 L202.5 91.5 M202.5 87.5 L195.5 91.5" stroke="#1e5aa8" stroke-width="0.9" fill="none" />
<path d="M212.5 81.5 L225.5 94 M225.5 81.5 L212.5 94" stroke="#c42828" stroke-width="3" fill="none" />
<path d="M212.5 81.5 L225.5 94 M225.5 81.5 L212.5 94" stroke="#f08888" stroke-width="1.4" fill="none" />
<path d="M235 88.5 L239.5 93.5 L249 81.5" stroke="#2a8a1a" stroke-width="2.8" fill="none" />
<path d="M235.5 88.5 L239.5 92.5 L248.5 82" stroke="#7ad060" stroke-width="0.8" fill="none" />
<path d="M606.5 86 A6.5 6.5 0 0 1 618 82.5 M619.5 88 A6.5 6.5 0 0 1 608 91.5" stroke="#2e8a2e" stroke-width="2.6" fill="none" />
<path d="M615 80 L620.5 80.5 L620 86 Z M611 94 L605.5 93.5 L606 88 Z" stroke="none" stroke-width="1" fill="#2e8a2e" />
<path d="M629 93.5 L638 84.5" stroke="#666" stroke-width="3.6" fill="none" />
<path d="M629 93.5 L638 84.5" stroke="#f4f4f4" stroke-width="1.8" fill="none" />
<path d="M637 80.5 A4.5 4.5 0 1 0 643.5 86.5 L640.5 87 L638 84.5 L639 81.5 Z" stroke="#666" stroke-width="1" fill="#f4f4f4" />
<rect x="34.5" y="104.5" width="198.5" height="248.0" fill="#fff" stroke="#8a8a8a" stroke-width="1" rx="0" />
<rect x="35" y="105" width="197.5" height="19" fill="#f0f0f0" stroke="none" stroke-width="1" rx="0" />
<line x1="35" y1="124.5" x2="232.5" y2="124.5" stroke="#a0a0a0" stroke-width="1" />
<path d="M44.5 109.5 H49.5 l1.2 -1.5 l1.2 1.5 h1 M42.5 112.5 H48.5 M41 115.5 H46.5 M40 118.5 H47 M44.5 109.5 L42.5 112.5 M42.5 112.5 L41 115.5 M41 115.5 L40 118.5" stroke="#3a3a3a" stroke-width="1" fill="none" />
<path d="M46.5 114.5 H56 V116 L52.8 119 V122 H49.8 V119 L46.5 116 Z" stroke="#444" stroke-width="1" fill="#d4dce6" />
<path d="M47.5 115.5 H55" stroke="#fff" stroke-width="1" fill="none" />
<text x="62.5" y="117.5" fill="#000" font-size="12.5" text-anchor="start" textLength="30.5" lengthAdjust="spacingAndGlyphs" >Filters</text>
<path d="M221 109 L217 113.5 L221 118 M226.5 109 L222.5 113.5 L226.5 118" stroke="#222" stroke-width="1.8" fill="none" />
<rect x="35" y="333" width="197.5" height="19" fill="#f0f0f0" stroke="none" stroke-width="1" rx="0" />
<line x1="35" y1="332.5" x2="232.5" y2="332.5" stroke="#a0a0a0" stroke-width="1" />
<rect x="40.5" y="337.5" width="11.0" height="11.0" fill="#f4f4f4" stroke="#8e8f8f" stroke-width="1" rx="0" />
<rect x="42.5" y="339.5" width="7.0" height="7.0" fill="#e4e4e4" stroke="#c0c0c0" stroke-width="1" rx="0" />
<text x="56" y="347" fill="#000" font-size="12.5" text-anchor="start" textLength="57" lengthAdjust="spacingAndGlyphs" >Invert filter</text>
<path d="M221 338.5 L217 343 L221 347.5 M226.5 338.5 L222.5 343 L226.5 347.5" stroke="#222" stroke-width="1.8" fill="none" />
<rect x="44.5" y="130.5" width="8.0" height="8.0" fill="#fff" stroke="#9a9a9a" stroke-width="1" rx="0" />
<line x1="46.5" y1="134.5" x2="50.5" y2="134.5" stroke="#334" stroke-width="1" />
<line x1="53" y1="134.5" x2="58" y2="134.5" stroke="#888" stroke-width="1" stroke-dasharray="1 1" />
<path d="M67.5 140 V150.5 H78" stroke="#888" stroke-width="1" fill="none" stroke-dasharray="1 1"/>
<path d="M59 137.5 L64 133 H74.5 L69.5 137.5 Z" stroke="#333" stroke-width="1" fill="#fff" />
<path d="M59 134.5 L64 130 H74.5 L69.5 134.5 Z" stroke="#333" stroke-width="1" fill="#fff" />
<path d="M59 131.5 L64 127 H74.5 L69.5 131.5 Z" stroke="#333" stroke-width="1" fill="#fff" />
<rect x="78" y="127" width="18" height="15" fill="#e6e6e6" stroke="none" stroke-width="1" rx="0" />
<text x="80" y="138.5" fill="#000" font-size="12.5" text-anchor="start" textLength="13.5" lengthAdjust="spacingAndGlyphs" >All</text>
<path d="M83.0 145.0 H88.0 l1.2 -1.5 l1.2 1.5 h1 M81.0 148.0 H87.0 M79.5 151.0 H85.0 M78.5 154.0 H85.5 M83.0 145.0 L81.0 148.0 M81.0 148.0 L79.5 151.0 M79.5 151.0 L78.5 154.0" stroke="#3a3a3a" stroke-width="1" fill="none" />
<path d="M85.0 150.0 H94.5 V151.5 L91.3 154.5 V157.5 H88.3 V154.5 L85.0 151.5 Z" stroke="#444" stroke-width="1" fill="#d4dce6" />
<path d="M86.0 151.0 H93.5" stroke="#fff" stroke-width="1" fill="none" />
<text x="99" y="155" fill="#000" font-size="12.5" text-anchor="start" textLength="79" lengthAdjust="spacingAndGlyphs" >All Used Layers</text>
<rect x="237" y="103" width="416" height="251" fill="#111" stroke="none" stroke-width="1" rx="0" />
<rect x="238.5" y="104.5" width="412.5" height="248.0" fill="#fff" stroke="none" stroke-width="1" rx="0" />
<defs><linearGradient id="hg" x1="0" y1="0" x2="0" y2="1"><stop offset="0" stop-color="#ffffff"/><stop offset="0.5" stop-color="#f8f8f8"/><stop offset="1" stop-color="#ebebeb"/></linearGradient></defs>
<rect x="238.5" y="104.5" width="396.0" height="19.5" fill="url(#hg)" stroke="none" stroke-width="1" rx="0" />
<line x1="238.5" y1="124.5" x2="634.5" y2="124.5" stroke="#c8c8c8" stroke-width="1" />
<line x1="262.5" y1="105" x2="262.5" y2="124" stroke="#dcdcdc" stroke-width="1" />
<line x1="337.5" y1="105" x2="337.5" y2="124" stroke="#dcdcdc" stroke-width="1" />
<line x1="363.5" y1="105" x2="363.5" y2="124" stroke="#dcdcdc" stroke-width="1" />
<line x1="401.5" y1="105" x2="401.5" y2="124" stroke="#dcdcdc" stroke-width="1" />
<line x1="432.5" y1="105" x2="432.5" y2="124" stroke="#dcdcdc" stroke-width="1" />
<line x1="480.5" y1="105" x2="480.5" y2="124" stroke="#dcdcdc" stroke-width="1" />
<line x1="544.5" y1="105" x2="544.5" y2="124" stroke="#dcdcdc" stroke-width="1" />
<line x1="612.5" y1="105" x2="612.5" y2="124" stroke="#dcdcdc" stroke-width="1" />
<text x="246.5" y="120" fill="#000" font-size="12.5" text-anchor="start" textLength="11" lengthAdjust="spacingAndGlyphs" >S..</text>
<text x="269" y="120" fill="#000" font-size="12.5" text-anchor="start" textLength="32" lengthAdjust="spacingAndGlyphs" >Name</text>
<text x="344" y="120" fill="#000" font-size="12.5" text-anchor="start" textLength="12" lengthAdjust="spacingAndGlyphs" >O..</text>
<text x="368.5" y="120" fill="#000" font-size="12.5" text-anchor="start" textLength="24.5" lengthAdjust="spacingAndGlyphs" >Fre...</text>
<text x="409.5" y="120" fill="#000" font-size="12.5" text-anchor="start" textLength="14" lengthAdjust="spacingAndGlyphs" >L...</text>
<text x="440" y="120" fill="#000" font-size="12.5" text-anchor="start" textLength="29.5" lengthAdjust="spacingAndGlyphs" >Color</text>
<text x="487.5" y="120" fill="#000" font-size="12.5" text-anchor="start" textLength="46" lengthAdjust="spacingAndGlyphs" >Linetype</text>
<text x="552" y="120" fill="#000" font-size="12.5" text-anchor="start" textLength="49" lengthAdjust="spacingAndGlyphs" >Linewei...</text>
<clipPath id="tr"><rect x="612" y="104" width="22.5" height="20"/></clipPath>
<text x="620.5" y="120" fill="#000" font-size="12.5" text-anchor="start" textLength="24" lengthAdjust="spacingAndGlyphs" clip-path="url(#tr)">Tran</text>
<path d="M323.5 119 L328.5 113.5 L333.5 119 Z" stroke="none" stroke-width="1" fill="#b4b4b4" />
<clipPath id="lc"><rect x="238.5" y="125" width="396" height="211.3"/></clipPath><g clip-path="url(#lc)">
<path d="M239.5 139.5 L244.5 133.5 H255.5 L250.5 139.5 Z" stroke="#1e5aa8" stroke-width="1" fill="#a8d0f0" />
<text x="266" y="140" fill="#000" font-size="12.5" text-anchor="start" textLength="52" lengthAdjust="spacingAndGlyphs" >Defpoints</text>
<path d="M349.3 129.5 a3.8 3.8 0 0 1 3.8 3.8 c0 2.2 -1.6 3 -1.9 5 h-3.8 c-0.3 -2 -1.9 -2.8 -1.9 -5 a3.8 3.8 0 0 1 3.8 -3.8 Z" stroke="#554" stroke-width="1" fill="#fff6b0" />
<path d="M347.6 139.7 h3.4 M348 141.3 h2.6" stroke="#445" stroke-width="1" fill="none" />
<circle cx="380.5" cy="136" r="4" fill="#ffe9a8" stroke="#665" stroke-width="1" />
<path d="M380.5 128.5 v2 M380.5 141.5 v2 M373 136 h2 M386 136 h2 M375.2 130.7 l1.4 1.4 M384.4 139.9 l1.4 1.4 M385.8 130.7 l-1.4 1.4 M376.6 139.9 l-1.4 1.4" stroke="#554" stroke-width="1" fill="none" />
<rect x="409.5" y="135.5" width="10.0" height="7.0" fill="#a8d4f0" stroke="#1e4a88" stroke-width="1" rx="0" />
<path d="M416.5 135.5 V133 a3.3 3.3 0 0 1 6.6 0 V134.5" stroke="#1e4a88" stroke-width="1.6" fill="none" />
<rect x="413.5" y="137.5" width="1.5" height="3.0" fill="#1e4a88" stroke="none" stroke-width="1" rx="0" />
<rect x="435.5" y="131.5" width="11.0" height="11.0" fill="#ffffff" stroke="#000" stroke-width="1" rx="0" />
<text x="453.5" y="140" fill="#000" font-size="12.5" text-anchor="start" textLength="17" lengthAdjust="spacingAndGlyphs" >w...</text>
<text x="485.5" y="140" fill="#000" font-size="12.5" text-anchor="start" textLength="51.5" lengthAdjust="spacingAndGlyphs" >Continu...</text>
<line x1="545.5" y1="136.5" x2="567.5" y2="136.5" stroke="#000" stroke-width="1" />
<text x="575" y="140" fill="#000" font-size="12.5" text-anchor="start" textLength="32.5" lengthAdjust="spacingAndGlyphs" >Defa...</text>
<text x="617.5" y="140" fill="#000" font-size="12.5" text-anchor="start" >0</text>
<path d="M239.5 157.5 L244.5 151.5 H255.5 L250.5 157.5 Z" stroke="#1e5aa8" stroke-width="1" fill="#a8d0f0" />
<text x="266" y="158" fill="#000" font-size="12.5" text-anchor="start" textLength="57" lengthAdjust="spacingAndGlyphs" >Dimension</text>
<path d="M349.3 147.5 a3.8 3.8 0 0 1 3.8 3.8 c0 2.2 -1.6 3 -1.9 5 h-3.8 c-0.3 -2 -1.9 -2.8 -1.9 -5 a3.8 3.8 0 0 1 3.8 -3.8 Z" stroke="#554" stroke-width="1" fill="#fff6b0" />
<path d="M347.6 157.7 h3.4 M348 159.3 h2.6" stroke="#445" stroke-width="1" fill="none" />
<circle cx="380.5" cy="154" r="4" fill="#ffe9a8" stroke="#665" stroke-width="1" />
<path d="M380.5 146.5 v2 M380.5 159.5 v2 M373 154 h2 M386 154 h2 M375.2 148.7 l1.4 1.4 M384.4 157.9 l1.4 1.4 M385.8 148.7 l-1.4 1.4 M376.6 157.9 l-1.4 1.4" stroke="#554" stroke-width="1" fill="none" />
<rect x="409.5" y="153.5" width="10.0" height="7.0" fill="#a8d4f0" stroke="#1e4a88" stroke-width="1" rx="0" />
<path d="M416.5 153.5 V151 a3.3 3.3 0 0 1 6.6 0 V152.5" stroke="#1e4a88" stroke-width="1.6" fill="none" />
<rect x="413.5" y="155.5" width="1.5" height="3.0" fill="#1e4a88" stroke="none" stroke-width="1" rx="0" />
<rect x="435.5" y="149.5" width="11.0" height="11.0" fill="#0033ff" stroke="#000" stroke-width="1" rx="0" />
<text x="453.5" y="158" fill="#000" font-size="12.5" text-anchor="start" textLength="18" lengthAdjust="spacingAndGlyphs" >160</text>
<text x="485.5" y="158" fill="#000" font-size="12.5" text-anchor="start" textLength="51.5" lengthAdjust="spacingAndGlyphs" >Continu...</text>
<line x1="545.5" y1="154.5" x2="567.5" y2="154.5" stroke="#000" stroke-width="1" />
<text x="575" y="158" fill="#000" font-size="12.5" text-anchor="start" textLength="33.5" lengthAdjust="spacingAndGlyphs" >0.05 ...</text>
<text x="617.5" y="158" fill="#000" font-size="12.5" text-anchor="start" >0</text>
<rect x="238.5" y="163.3" width="396.0" height="17.4" fill="#e4e4e4" stroke="none" stroke-width="1" rx="0" />
<path d="M240 172 L244.5 177 L254 166" stroke="#2a8a1a" stroke-width="2.4" fill="none" />
<path d="M240.5 172 L244.5 176 L253.5 166.5" stroke="#7ad060" stroke-width="0.7" fill="none" />
<text x="266" y="176" fill="#000" font-size="12.5" text-anchor="start" textLength="25" lengthAdjust="spacingAndGlyphs" >door</text>
<path d="M349.3 165.5 a3.8 3.8 0 0 1 3.8 3.8 c0 2.2 -1.6 3 -1.9 5 h-3.8 c-0.3 -2 -1.9 -2.8 -1.9 -5 a3.8 3.8 0 0 1 3.8 -3.8 Z" stroke="#554" stroke-width="1" fill="#fff6b0" />
<path d="M347.6 175.7 h3.4 M348 177.3 h2.6" stroke="#445" stroke-width="1" fill="none" />
<circle cx="380.5" cy="172" r="4" fill="#ffe9a8" stroke="#665" stroke-width="1" />
<path d="M380.5 164.5 v2 M380.5 177.5 v2 M373 172 h2 M386 172 h2 M375.2 166.7 l1.4 1.4 M384.4 175.9 l1.4 1.4 M385.8 166.7 l-1.4 1.4 M376.6 175.9 l-1.4 1.4" stroke="#554" stroke-width="1" fill="none" />
<rect x="409.5" y="171.5" width="10.0" height="7.0" fill="#a8d4f0" stroke="#1e4a88" stroke-width="1" rx="0" />
<path d="M416.5 171.5 V169 a3.3 3.3 0 0 1 6.6 0 V170.5" stroke="#1e4a88" stroke-width="1.6" fill="none" />
<rect x="413.5" y="173.5" width="1.5" height="3.0" fill="#1e4a88" stroke="none" stroke-width="1" rx="0" />
<rect x="435.5" y="167.5" width="11.0" height="11.0" fill="#a34c00" stroke="#000" stroke-width="1" rx="0" />
<text x="453.5" y="176" fill="#000" font-size="12.5" text-anchor="start" textLength="12" lengthAdjust="spacingAndGlyphs" >32</text>
<text x="485.5" y="176" fill="#000" font-size="12.5" text-anchor="start" textLength="51.5" lengthAdjust="spacingAndGlyphs" >Continu...</text>
<line x1="545.5" y1="172.5" x2="567.5" y2="172.5" stroke="#000" stroke-width="1" />
<text x="575" y="176" fill="#000" font-size="12.5" text-anchor="start" textLength="32.5" lengthAdjust="spacingAndGlyphs" >Defa...</text>
<text x="617.5" y="176" fill="#000" font-size="12.5" text-anchor="start" >0</text>
<path d="M239.5 193.5 L244.5 187.5 H255.5 L250.5 193.5 Z" stroke="#1e5aa8" stroke-width="1" fill="#a8d0f0" />
<text x="266" y="194" fill="#000" font-size="12.5" text-anchor="start" textLength="43" lengthAdjust="spacingAndGlyphs" >fixtures1</text>
<path d="M349.3 183.5 a3.8 3.8 0 0 1 3.8 3.8 c0 2.2 -1.6 3 -1.9 5 h-3.8 c-0.3 -2 -1.9 -2.8 -1.9 -5 a3.8 3.8 0 0 1 3.8 -3.8 Z" stroke="#554" stroke-width="1" fill="#fff6b0" />
<path d="M347.6 193.7 h3.4 M348 195.3 h2.6" stroke="#445" stroke-width="1" fill="none" />
<circle cx="380.5" cy="190" r="4" fill="#ffe9a8" stroke="#665" stroke-width="1" />
<path d="M380.5 182.5 v2 M380.5 195.5 v2 M373 190 h2 M386 190 h2 M375.2 184.7 l1.4 1.4 M384.4 193.9 l1.4 1.4 M385.8 184.7 l-1.4 1.4 M376.6 193.9 l-1.4 1.4" stroke="#554" stroke-width="1" fill="none" />
<rect x="409.5" y="189.5" width="10.0" height="7.0" fill="#a8d4f0" stroke="#1e4a88" stroke-width="1" rx="0" />
<path d="M416.5 189.5 V187 a3.3 3.3 0 0 1 6.6 0 V188.5" stroke="#1e4a88" stroke-width="1.6" fill="none" />
<rect x="413.5" y="191.5" width="1.5" height="3.0" fill="#1e4a88" stroke="none" stroke-width="1" rx="0" />
<rect x="435.5" y="185.5" width="11.0" height="11.0" fill="#ffdf7f" stroke="#000" stroke-width="1" rx="0" />
<text x="453.5" y="194" fill="#000" font-size="12.5" text-anchor="start" textLength="12" lengthAdjust="spacingAndGlyphs" >41</text>
<text x="485.5" y="194" fill="#000" font-size="12.5" text-anchor="start" textLength="51.5" lengthAdjust="spacingAndGlyphs" >Continu...</text>
<line x1="545.5" y1="190.5" x2="567.5" y2="190.5" stroke="#000" stroke-width="1" />
<text x="575" y="194" fill="#000" font-size="12.5" text-anchor="start" textLength="32.5" lengthAdjust="spacingAndGlyphs" >Defa...</text>
<text x="617.5" y="194" fill="#000" font-size="12.5" text-anchor="start" >0</text>
<path d="M239.5 211.5 L244.5 205.5 H255.5 L250.5 211.5 Z" stroke="#1e5aa8" stroke-width="1" fill="#a8d0f0" />
<text x="266" y="212" fill="#000" font-size="12.5" text-anchor="start" textLength="63" lengthAdjust="spacingAndGlyphs" >FLOOR DE...</text>
<path d="M349.3 201.5 a3.8 3.8 0 0 1 3.8 3.8 c0 2.2 -1.6 3 -1.9 5 h-3.8 c-0.3 -2 -1.9 -2.8 -1.9 -5 a3.8 3.8 0 0 1 3.8 -3.8 Z" stroke="#554" stroke-width="1" fill="#fff6b0" />
<path d="M347.6 211.7 h3.4 M348 213.3 h2.6" stroke="#445" stroke-width="1" fill="none" />
<circle cx="380.5" cy="208" r="4" fill="#ffe9a8" stroke="#665" stroke-width="1" />
<path d="M380.5 200.5 v2 M380.5 213.5 v2 M373 208 h2 M386 208 h2 M375.2 202.7 l1.4 1.4 M384.4 211.9 l1.4 1.4 M385.8 202.7 l-1.4 1.4 M376.6 211.9 l-1.4 1.4" stroke="#554" stroke-width="1" fill="none" />
<rect x="409.5" y="207.5" width="10.0" height="7.0" fill="#a8d4f0" stroke="#1e4a88" stroke-width="1" rx="0" />
<path d="M416.5 207.5 V205 a3.3 3.3 0 0 1 6.6 0 V206.5" stroke="#1e4a88" stroke-width="1.6" fill="none" />
<rect x="413.5" y="209.5" width="1.5" height="3.0" fill="#1e4a88" stroke="none" stroke-width="1" rx="0" />
<rect x="435.5" y="203.5" width="11.0" height="11.0" fill="#4c4c4c" stroke="#000" stroke-width="1" rx="0" />
<text x="453.5" y="212" fill="#000" font-size="12.5" text-anchor="start" textLength="21" lengthAdjust="spacingAndGlyphs" >69...</text>
<text x="485.5" y="212" fill="#000" font-size="12.5" text-anchor="start" textLength="51.5" lengthAdjust="spacingAndGlyphs" >Continu...</text>
<line x1="545.5" y1="208.5" x2="567.5" y2="208.5" stroke="#000" stroke-width="1" />
<text x="575" y="212" fill="#000" font-size="12.5" text-anchor="start" textLength="32.5" lengthAdjust="spacingAndGlyphs" >Defa...</text>
<text x="617.5" y="212" fill="#000" font-size="12.5" text-anchor="start" >0</text>
<path d="M239.5 229.5 L244.5 223.5 H255.5 L250.5 229.5 Z" stroke="#1e5aa8" stroke-width="1" fill="#a8d0f0" />
<text x="266" y="230" fill="#000" font-size="12.5" text-anchor="start" textLength="61" lengthAdjust="spacingAndGlyphs" >GUIDE DIM.</text>
<path d="M349.3 219.5 a3.8 3.8 0 0 1 3.8 3.8 c0 2.2 -1.6 3 -1.9 5 h-3.8 c-0.3 -2 -1.9 -2.8 -1.9 -5 a3.8 3.8 0 0 1 3.8 -3.8 Z" stroke="#554" stroke-width="1" fill="#fff6b0" />
<path d="M347.6 229.7 h3.4 M348 231.3 h2.6" stroke="#445" stroke-width="1" fill="none" />
<circle cx="380.5" cy="226" r="4" fill="#ffe9a8" stroke="#665" stroke-width="1" />
<path d="M380.5 218.5 v2 M380.5 231.5 v2 M373 226 h2 M386 226 h2 M375.2 220.7 l1.4 1.4 M384.4 229.9 l1.4 1.4 M385.8 220.7 l-1.4 1.4 M376.6 229.9 l-1.4 1.4" stroke="#554" stroke-width="1" fill="none" />
<rect x="409.5" y="225.5" width="10.0" height="7.0" fill="#a8d4f0" stroke="#1e4a88" stroke-width="1" rx="0" />
<path d="M416.5 225.5 V223 a3.3 3.3 0 0 1 6.6 0 V224.5" stroke="#1e4a88" stroke-width="1.6" fill="none" />
<rect x="413.5" y="227.5" width="1.5" height="3.0" fill="#1e4a88" stroke="none" stroke-width="1" rx="0" />
<rect x="435.5" y="221.5" width="11.0" height="11.0" fill="#005f7f" stroke="#000" stroke-width="1" rx="0" />
<text x="453.5" y="230" fill="#000" font-size="12.5" text-anchor="start" textLength="18" lengthAdjust="spacingAndGlyphs" >144</text>
<text x="485.5" y="230" fill="#000" font-size="12.5" text-anchor="start" textLength="53" lengthAdjust="spacingAndGlyphs" >Dash Sty...</text>
<line x1="545.5" y1="226.5" x2="567.5" y2="226.5" stroke="#000" stroke-width="1" />
<text x="575" y="230" fill="#000" font-size="12.5" text-anchor="start" textLength="32.5" lengthAdjust="spacingAndGlyphs" >Defa...</text>
<text x="617.5" y="230" fill="#000" font-size="12.5" text-anchor="start" >0</text>
<path d="M239.5 247.5 L244.5 241.5 H255.5 L250.5 247.5 Z" stroke="#1e5aa8" stroke-width="1" fill="#a8d0f0" />
<text x="266" y="248" fill="#000" font-size="12.5" text-anchor="start" textLength="51" lengthAdjust="spacingAndGlyphs" >hatchwall</text>
<path d="M349.3 237.5 a3.8 3.8 0 0 1 3.8 3.8 c0 2.2 -1.6 3 -1.9 5 h-3.8 c-0.3 -2 -1.9 -2.8 -1.9 -5 a3.8 3.8 0 0 1 3.8 -3.8 Z" stroke="#554" stroke-width="1" fill="#fff6b0" />
<path d="M347.6 247.7 h3.4 M348 249.3 h2.6" stroke="#445" stroke-width="1" fill="none" />
<circle cx="380.5" cy="244" r="4" fill="#ffe9a8" stroke="#665" stroke-width="1" />
<path d="M380.5 236.5 v2 M380.5 249.5 v2 M373 244 h2 M386 244 h2 M375.2 238.7 l1.4 1.4 M384.4 247.9 l1.4 1.4 M385.8 238.7 l-1.4 1.4 M376.6 247.9 l-1.4 1.4" stroke="#554" stroke-width="1" fill="none" />
<rect x="409.5" y="243.5" width="10.0" height="7.0" fill="#a8d4f0" stroke="#1e4a88" stroke-width="1" rx="0" />
<path d="M416.5 243.5 V241 a3.3 3.3 0 0 1 6.6 0 V242.5" stroke="#1e4a88" stroke-width="1.6" fill="none" />
<rect x="413.5" y="245.5" width="1.5" height="3.0" fill="#1e4a88" stroke="none" stroke-width="1" rx="0" />
<rect x="435.5" y="239.5" width="11.0" height="11.0" fill="#adadad" stroke="#000" stroke-width="1" rx="0" />
<text x="453.5" y="248" fill="#000" font-size="12.5" text-anchor="start" textLength="18" lengthAdjust="spacingAndGlyphs" >253</text>
<text x="485.5" y="248" fill="#000" font-size="12.5" text-anchor="start" textLength="51.5" lengthAdjust="spacingAndGlyphs" >Continu...</text>
<line x1="545.5" y1="244.5" x2="567.5" y2="244.5" stroke="#000" stroke-width="1" />
<text x="575" y="248" fill="#000" font-size="12.5" text-anchor="start" textLength="32.5" lengthAdjust="spacingAndGlyphs" >Defa...</text>
<text x="617.5" y="248" fill="#000" font-size="12.5" text-anchor="start" >0</text>
<path d="M239.5 265.5 L244.5 259.5 H255.5 L250.5 265.5 Z" stroke="#1e5aa8" stroke-width="1" fill="#a8d0f0" />
<text x="266" y="266" fill="#000" font-size="12.5" text-anchor="start" textLength="65.5" lengthAdjust="spacingAndGlyphs" >LIGHT LINES</text>
<path d="M349.3 255.5 a3.8 3.8 0 0 1 3.8 3.8 c0 2.2 -1.6 3 -1.9 5 h-3.8 c-0.3 -2 -1.9 -2.8 -1.9 -5 a3.8 3.8 0 0 1 3.8 -3.8 Z" stroke="#554" stroke-width="1" fill="#fff6b0" />
<path d="M347.6 265.7 h3.4 M348 267.3 h2.6" stroke="#445" stroke-width="1" fill="none" />
<circle cx="380.5" cy="262" r="4" fill="#ffe9a8" stroke="#665" stroke-width="1" />
<path d="M380.5 254.5 v2 M380.5 267.5 v2 M373 262 h2 M386 262 h2 M375.2 256.7 l1.4 1.4 M384.4 265.9 l1.4 1.4 M385.8 256.7 l-1.4 1.4 M376.6 265.9 l-1.4 1.4" stroke="#554" stroke-width="1" fill="none" />
<rect x="409.5" y="261.5" width="10.0" height="7.0" fill="#a8d4f0" stroke="#1e4a88" stroke-width="1" rx="0" />
<path d="M416.5 261.5 V259 a3.3 3.3 0 0 1 6.6 0 V260.5" stroke="#1e4a88" stroke-width="1.6" fill="none" />
<rect x="413.5" y="263.5" width="1.5" height="3.0" fill="#1e4a88" stroke="none" stroke-width="1" rx="0" />
<rect x="435.5" y="257.5" width="11.0" height="11.0" fill="#a37c51" stroke="#000" stroke-width="1" rx="0" />
<text x="453.5" y="266" fill="#000" font-size="12.5" text-anchor="start" textLength="12" lengthAdjust="spacingAndGlyphs" >33</text>
<text x="485.5" y="266" fill="#000" font-size="12.5" text-anchor="start" textLength="51.5" lengthAdjust="spacingAndGlyphs" >Continu...</text>
<line x1="545.5" y1="262.5" x2="567.5" y2="262.5" stroke="#000" stroke-width="1" />
<text x="575" y="266" fill="#000" font-size="12.5" text-anchor="start" textLength="32.5" lengthAdjust="spacingAndGlyphs" >Defa...</text>
<text x="617.5" y="266" fill="#000" font-size="12.5" text-anchor="start" >0</text>
<path d="M239.5 283.5 L244.5 277.5 H255.5 L250.5 283.5 Z" stroke="#1e5aa8" stroke-width="1" fill="#a8d0f0" />
<text x="266" y="284" fill="#000" font-size="12.5" text-anchor="start" textLength="27" lengthAdjust="spacingAndGlyphs" >mark</text>
<path d="M349.3 273.5 a3.8 3.8 0 0 1 3.8 3.8 c0 2.2 -1.6 3 -1.9 5 h-3.8 c-0.3 -2 -1.9 -2.8 -1.9 -5 a3.8 3.8 0 0 1 3.8 -3.8 Z" stroke="#554" stroke-width="1" fill="#fff6b0" />
<path d="M347.6 283.7 h3.4 M348 285.3 h2.6" stroke="#445" stroke-width="1" fill="none" />
<circle cx="380.5" cy="280" r="4" fill="#ffe9a8" stroke="#665" stroke-width="1" />
<path d="M380.5 272.5 v2 M380.5 285.5 v2 M373 280 h2 M386 280 h2 M375.2 274.7 l1.4 1.4 M384.4 283.9 l1.4 1.4 M385.8 274.7 l-1.4 1.4 M376.6 283.9 l-1.4 1.4" stroke="#554" stroke-width="1" fill="none" />
<rect x="409.5" y="279.5" width="10.0" height="7.0" fill="#a8d4f0" stroke="#1e4a88" stroke-width="1" rx="0" />
<path d="M416.5 279.5 V277 a3.3 3.3 0 0 1 6.6 0 V278.5" stroke="#1e4a88" stroke-width="1.6" fill="none" />
<rect x="413.5" y="281.5" width="1.5" height="3.0" fill="#1e4a88" stroke="none" stroke-width="1" rx="0" />
<rect x="435.5" y="275.5" width="11.0" height="11.0" fill="#ffff00" stroke="#000" stroke-width="1" rx="0" />
<text x="453.5" y="284" fill="#000" font-size="12.5" text-anchor="start" textLength="12" lengthAdjust="spacingAndGlyphs" >50</text>
<text x="485.5" y="284" fill="#000" font-size="12.5" text-anchor="start" textLength="51.5" lengthAdjust="spacingAndGlyphs" >Continu...</text>
<line x1="545.5" y1="280.5" x2="567.5" y2="280.5" stroke="#000" stroke-width="1" />
<text x="575" y="284" fill="#000" font-size="12.5" text-anchor="start" textLength="32.5" lengthAdjust="spacingAndGlyphs" >Defa...</text>
<text x="617.5" y="284" fill="#000" font-size="12.5" text-anchor="start" >0</text>
<path d="M239.5 301.5 L244.5 295.5 H255.5 L250.5 301.5 Z" stroke="#1e5aa8" stroke-width="1" fill="#a8d0f0" />
<text x="266" y="302" fill="#000" font-size="12.5" text-anchor="start" textLength="29" lengthAdjust="spacingAndGlyphs" >None</text>
<path d="M349.3 291.5 a3.8 3.8 0 0 1 3.8 3.8 c0 2.2 -1.6 3 -1.9 5 h-3.8 c-0.3 -2 -1.9 -2.8 -1.9 -5 a3.8 3.8 0 0 1 3.8 -3.8 Z" stroke="#554" stroke-width="1" fill="#fff6b0" />
<path d="M347.6 301.7 h3.4 M348 303.3 h2.6" stroke="#445" stroke-width="1" fill="none" />
<circle cx="380.5" cy="298" r="4" fill="#ffe9a8" stroke="#665" stroke-width="1" />
<path d="M380.5 290.5 v2 M380.5 303.5 v2 M373 298 h2 M386 298 h2 M375.2 292.7 l1.4 1.4 M384.4 301.9 l1.4 1.4 M385.8 292.7 l-1.4 1.4 M376.6 301.9 l-1.4 1.4" stroke="#554" stroke-width="1" fill="none" />
<rect x="409.5" y="297.5" width="10.0" height="7.0" fill="#a8d4f0" stroke="#1e4a88" stroke-width="1" rx="0" />
<path d="M416.5 297.5 V295 a3.3 3.3 0 0 1 6.6 0 V296.5" stroke="#1e4a88" stroke-width="1.6" fill="none" />
<rect x="413.5" y="299.5" width="1.5" height="3.0" fill="#1e4a88" stroke="none" stroke-width="1" rx="0" />
<rect x="435.5" y="293.5" width="11.0" height="11.0" fill="#ffffff" stroke="#000" stroke-width="1" rx="0" />
<text x="453.5" y="302" fill="#000" font-size="12.5" text-anchor="start" textLength="17" lengthAdjust="spacingAndGlyphs" >w...</text>
<text x="485.5" y="302" fill="#000" font-size="12.5" text-anchor="start" textLength="51.5" lengthAdjust="spacingAndGlyphs" >Continu...</text>
<line x1="545.5" y1="298.5" x2="567.5" y2="298.5" stroke="#000" stroke-width="1" />
<text x="575" y="302" fill="#000" font-size="12.5" text-anchor="start" textLength="33.5" lengthAdjust="spacingAndGlyphs" >0.05 ...</text>
<text x="617.5" y="302" fill="#000" font-size="12.5" text-anchor="start" >0</text>
<path d="M239.5 319.5 L244.5 313.5 H255.5 L250.5 319.5 Z" stroke="#1e5aa8" stroke-width="1" fill="#a8d0f0" />
<text x="266" y="320" fill="#000" font-size="12.5" text-anchor="start" textLength="61" lengthAdjust="spacingAndGlyphs" >ROOMS&amp;...</text>
<path d="M349.3 309.5 a3.8 3.8 0 0 1 3.8 3.8 c0 2.2 -1.6 3 -1.9 5 h-3.8 c-0.3 -2 -1.9 -2.8 -1.9 -5 a3.8 3.8 0 0 1 3.8 -3.8 Z" stroke="#554" stroke-width="1" fill="#fff6b0" />
<path d="M347.6 319.7 h3.4 M348 321.3 h2.6" stroke="#445" stroke-width="1" fill="none" />
<circle cx="380.5" cy="316" r="4" fill="#ffe9a8" stroke="#665" stroke-width="1" />
<path d="M380.5 308.5 v2 M380.5 321.5 v2 M373 316 h2 M386 316 h2 M375.2 310.7 l1.4 1.4 M384.4 319.9 l1.4 1.4 M385.8 310.7 l-1.4 1.4 M376.6 319.9 l-1.4 1.4" stroke="#554" stroke-width="1" fill="none" />
<rect x="409.5" y="315.5" width="10.0" height="7.0" fill="#a8d4f0" stroke="#1e4a88" stroke-width="1" rx="0" />
<path d="M416.5 315.5 V313 a3.3 3.3 0 0 1 6.6 0 V314.5" stroke="#1e4a88" stroke-width="1.6" fill="none" />
<rect x="413.5" y="317.5" width="1.5" height="3.0" fill="#1e4a88" stroke="none" stroke-width="1" rx="0" />
<rect x="435.5" y="311.5" width="11.0" height="11.0" fill="#00ffff" stroke="#000" stroke-width="1" rx="0" />
<text x="453.5" y="320" fill="#000" font-size="12.5" text-anchor="start" textLength="18" lengthAdjust="spacingAndGlyphs" >130</text>
<text x="485.5" y="320" fill="#000" font-size="12.5" text-anchor="start" textLength="51.5" lengthAdjust="spacingAndGlyphs" >Continu...</text>
<line x1="545.5" y1="316.5" x2="567.5" y2="316.5" stroke="#000" stroke-width="1" />
<text x="575" y="320" fill="#000" font-size="12.5" text-anchor="start" textLength="32.5" lengthAdjust="spacingAndGlyphs" >Defa...</text>
<text x="617.5" y="320" fill="#000" font-size="12.5" text-anchor="start" >0</text>
<path d="M239.5 337.5 L244.5 331.5 H255.5 L250.5 337.5 Z" stroke="#1e5aa8" stroke-width="1" fill="#a8d0f0" />
<text x="266" y="338" fill="#000" font-size="12.5" text-anchor="start" textLength="23" lengthAdjust="spacingAndGlyphs" >stair</text>
<path d="M349.3 327.5 a3.8 3.8 0 0 1 3.8 3.8 c0 2.2 -1.6 3 -1.9 5 h-3.8 c-0.3 -2 -1.9 -2.8 -1.9 -5 a3.8 3.8 0 0 1 3.8 -3.8 Z" stroke="#554" stroke-width="1" fill="#fff6b0" />
<path d="M347.6 337.7 h3.4 M348 339.3 h2.6" stroke="#445" stroke-width="1" fill="none" />
<circle cx="380.5" cy="334" r="4" fill="#ffe9a8" stroke="#665" stroke-width="1" />
<path d="M380.5 326.5 v2 M380.5 339.5 v2 M373 334 h2 M386 334 h2 M375.2 328.7 l1.4 1.4 M384.4 337.9 l1.4 1.4 M385.8 328.7 l-1.4 1.4 M376.6 337.9 l-1.4 1.4" stroke="#554" stroke-width="1" fill="none" />
<rect x="409.5" y="333.5" width="10.0" height="7.0" fill="#a8d4f0" stroke="#1e4a88" stroke-width="1" rx="0" />
<path d="M416.5 333.5 V331 a3.3 3.3 0 0 1 6.6 0 V332.5" stroke="#1e4a88" stroke-width="1.6" fill="none" />
<rect x="413.5" y="335.5" width="1.5" height="3.0" fill="#1e4a88" stroke="none" stroke-width="1" rx="0" />
<rect x="435.5" y="329.5" width="11.0" height="11.0" fill="#828282" stroke="#000" stroke-width="1" rx="0" />
<text x="453.5" y="338" fill="#000" font-size="12.5" text-anchor="start" textLength="18" lengthAdjust="spacingAndGlyphs" >252</text>
<text x="485.5" y="338" fill="#000" font-size="12.5" text-anchor="start" textLength="51.5" lengthAdjust="spacingAndGlyphs" >Continu...</text>
<line x1="545.5" y1="334.5" x2="567.5" y2="334.5" stroke="#000" stroke-width="1" />
<text x="575" y="338" fill="#000" font-size="12.5" text-anchor="start" textLength="32.5" lengthAdjust="spacingAndGlyphs" >Defa...</text>
<text x="617.5" y="338" fill="#000" font-size="12.5" text-anchor="start" >0</text>
</g>
<rect x="634.5" y="104.5" width="16.5" height="233.0" fill="#f0f0f0" stroke="none" stroke-width="1" rx="0" />
<defs><linearGradient id="vt" x1="0" y1="0" x2="1" y2="0"><stop offset="0" stop-color="#f4f4f4"/><stop offset="0.5" stop-color="#e2e2e2"/><stop offset="1" stop-color="#d4d4d4"/></linearGradient></defs>
<rect x="636.5" y="165.5" width="12.5" height="110.0" fill="url(#vt)" stroke="#a0a0a0" stroke-width="1" rx="2" />
<path d="M640 218.5 H646 M640 220.5 H646 M640 222.5 H646" stroke="#666" stroke-width="1" fill="none" />
<path d="M639 116 L643 111.5 L647 116 Z" stroke="none" stroke-width="1" fill="#555" />
<path d="M639 324.5 L643 329 L647 324.5 Z" stroke="none" stroke-width="1" fill="#555" />
<rect x="238.5" y="337" width="396.0" height="15.5" fill="#f0f0f0" stroke="none" stroke-width="1" rx="0" />
<defs><linearGradient id="ht" x1="0" y1="0" x2="0" y2="1"><stop offset="0" stop-color="#f4f4f4"/><stop offset="0.5" stop-color="#e2e2e2"/><stop offset="1" stop-color="#d4d4d4"/></linearGradient></defs>
<rect x="256.5" y="338.5" width="186.5" height="12.5" fill="url(#ht)" stroke="#a0a0a0" stroke-width="1" rx="2" />
<path d="M347.5 342 V347 M349.5 342 V347 M351.5 342 V347" stroke="#666" stroke-width="1" fill="none" />
<path d="M249 340.5 L244.5 344.5 L249 348.5 Z" stroke="none" stroke-width="1" fill="#555" />
<path d="M624.5 340.5 L629 344.5 L624.5 348.5 Z" stroke="none" stroke-width="1" fill="#555" />
<rect x="634.5" y="337" width="16.5" height="15.5" fill="#f0f0f0" stroke="none" stroke-width="1" rx="0" />
<rect x="34.5" y="361.5" width="617.5" height="23.5" fill="#f4f4f4" stroke="#d8d8d8" stroke-width="1" rx="0" />
<line x1="34.5" y1="361.5" x2="652" y2="361.5" stroke="#a8a8a8" stroke-width="1" />
<text x="37" y="377" fill="#000" font-size="12.5" text-anchor="start" textLength="211" lengthAdjust="spacingAndGlyphs" >All: 20 layers displayed of 20 total layers</text>
</svg>
<svg class="a" style="left:0;top:0" width="1366" height="768" viewBox="0 0 1366 768" font-family="Liberation Sans, sans-serif" >
<defs><linearGradient id="cdk" x1="0" y1="0" x2="0" y2="1"><stop offset="0" stop-color="#505050"/><stop offset="1" stop-color="#2c2c2c"/></linearGradient></defs>
<path d="M275.5 697.5 V674 Q275.5 671 278.5 671 H329 V697.5 Z" stroke="none" stroke-width="0" fill="url(#cdk)" />
<path d="M329 671 H1088 Q1091 671 1091 674 V697.5 H329 Z" stroke="none" stroke-width="0" fill="#f8f8f8" fill-opacity="0.72"/>
<rect x="275.5" y="696.6" width="815.5" height="0.9" fill="#4a4a4a" stroke="none" stroke-width="1" rx="0" fill-opacity="0.7"/>
<rect x="279.5" y="675" width="1.5" height="1.5" fill="#aaa" stroke="none" stroke-width="1" rx="0" />
<rect x="282.5" y="675" width="1.5" height="1.5" fill="#aaa" stroke="none" stroke-width="1" rx="0" />
<rect x="279.5" y="678" width="1.5" height="1.5" fill="#aaa" stroke="none" stroke-width="1" rx="0" />
<rect x="282.5" y="678" width="1.5" height="1.5" fill="#aaa" stroke="none" stroke-width="1" rx="0" />
<rect x="279.5" y="681" width="1.5" height="1.5" fill="#aaa" stroke="none" stroke-width="1" rx="0" />
<rect x="282.5" y="681" width="1.5" height="1.5" fill="#aaa" stroke="none" stroke-width="1" rx="0" />
<rect x="279.5" y="684" width="1.5" height="1.5" fill="#aaa" stroke="none" stroke-width="1" rx="0" />
<rect x="282.5" y="684" width="1.5" height="1.5" fill="#aaa" stroke="none" stroke-width="1" rx="0" />
<rect x="279.5" y="687" width="1.5" height="1.5" fill="#aaa" stroke="none" stroke-width="1" rx="0" />
<rect x="282.5" y="687" width="1.5" height="1.5" fill="#aaa" stroke="none" stroke-width="1" rx="0" />
<rect x="279.5" y="690" width="1.5" height="1.5" fill="#aaa" stroke="none" stroke-width="1" rx="0" />
<rect x="282.5" y="690" width="1.5" height="1.5" fill="#aaa" stroke="none" stroke-width="1" rx="0" />
<path d="M291.5 680.5 L298.5 687.5 M298.5 680.5 L291.5 687.5" stroke="#e4e4e4" stroke-width="2.2" fill="none" />
<path d="M314 678 A3.6 3.6 0 1 0 318.5 682 L316 682.5 L314 680.5 Z" stroke="#eee" stroke-width="1" fill="#ddd" />
<path d="M316.5 683.5 L323 690" stroke="#e8e8e8" stroke-width="3" fill="none" />
<rect x="334.5" y="677.5" width="13.5" height="12.5" fill="#a4a8ae" stroke="#6a7078" stroke-width="1" rx="1.5" />
<path d="M337.5 681 L341 684 L337.5 687 M342 688 H345.5" stroke="#334" stroke-width="1.2" fill="none" />
<path d="M352.5 681.5 H358 L355.2 684.7 Z" stroke="none" stroke-width="1" fill="#666" />
<text x="366" y="688" fill="#8c8c8c" font-size="12.5" text-anchor="start" textLength="26" lengthAdjust="spacingAndGlyphs" font-style="italic">Type</text>
<text x="400.5" y="688" fill="#8c8c8c" font-size="12.5" text-anchor="start" textLength="5.5" lengthAdjust="spacingAndGlyphs" font-style="italic">a</text>
<text x="414.5" y="688" fill="#8c8c8c" font-size="12.5" text-anchor="start" textLength="48.5" lengthAdjust="spacingAndGlyphs" font-style="italic">command</text>
<path d="M1080.5 686.5 L1084 682.5 L1087.5 686.5 Z" stroke="none" stroke-width="1" fill="#222" />
<defs><linearGradient id="tb" x1="0" y1="0" x2="0" y2="1"><stop offset="0" stop-color="#f6f6f6"/><stop offset="0.8" stop-color="#ededed"/><stop offset="1" stop-color="#e4e4e4"/></linearGradient></defs>
<rect x="0" y="697.5" width="1366" height="17.0" fill="url(#tb)" stroke="none" stroke-width="1" rx="0" />
<rect x="0" y="177" width="2" height="539" fill="#a2a2a2" stroke="none" stroke-width="1" rx="0" />
<rect x="1364" y="178" width="2" height="538" fill="#a2a2a2" stroke="none" stroke-width="1" rx="0" />
<rect x="0" y="714.5" width="1366" height="1.8" fill="#2a2a2a" stroke="none" stroke-width="1" rx="0" />
<defs><linearGradient id="nb" x1="0" y1="0" x2="0" y2="1"><stop offset="0" stop-color="#fafafa"/><stop offset="1" stop-color="#dcdcdc"/></linearGradient></defs>
<rect x="2" y="698" width="59.5" height="15.5" fill="url(#nb)" stroke="none" stroke-width="1" rx="0" />
<line x1="16.5" y1="698" x2="16.5" y2="714" stroke="#a8a8a8" stroke-width="1" />
<line x1="31.5" y1="698" x2="31.5" y2="714" stroke="#a8a8a8" stroke-width="1" />
<line x1="46" y1="698" x2="46" y2="714" stroke="#a8a8a8" stroke-width="1" />
<line x1="61.5" y1="698" x2="61.5" y2="714" stroke="#a8a8a8" stroke-width="1" />
<path d="M5.5 701.5 V710.5" stroke="#555" stroke-width="1.4" fill="none" />
<path d="M12.5 701.5 V710.5 L7 706 Z" stroke="none" stroke-width="1" fill="#555" />
<path d="M27 701.5 V710.5 L21.5 706 Z" stroke="none" stroke-width="1" fill="#555" />
<path d="M36 701.5 V710.5 L41.5 706 Z" stroke="none" stroke-width="1" fill="#555" />
<path d="M50.5 701.5 V710.5 L56 706 Z" stroke="none" stroke-width="1" fill="#555" />
<path d="M57.5 701.5 V710.5" stroke="#555" stroke-width="1.4" fill="none" />
<path d="M62 697.5 L67.5 714.5 H110 L115.5 697.5 Z" stroke="none" stroke-width="1" fill="#212830" />
<text x="74.5" y="710.5" fill="#fff" font-size="12.5" text-anchor="start" textLength="28" lengthAdjust="spacingAndGlyphs" >Model</text>
<text x="120" y="710.5" fill="#000" font-size="12.5" text-anchor="start" textLength="37" lengthAdjust="spacingAndGlyphs" >Layout1</text>
<text x="175" y="710.5" fill="#000" font-size="12.5" text-anchor="start" textLength="37.5" lengthAdjust="spacingAndGlyphs" >Layout2</text>
<line x1="113.5" y1="714" x2="119.0" y2="698" stroke="#555" stroke-width="1" />
<line x1="165" y1="714" x2="170.5" y2="698" stroke="#555" stroke-width="1" />
<line x1="220" y1="714" x2="225.5" y2="698" stroke="#555" stroke-width="1" />
<defs><linearGradient id="sb" x1="0" y1="0" x2="0" y2="1"><stop offset="0" stop-color="#b6b6b6"/><stop offset="1" stop-color="#8a8a8a"/></linearGradient></defs>
<rect x="0" y="716.3" width="1366" height="22.2" fill="url(#sb)" stroke="none" stroke-width="1" rx="0" />
<rect x="507" y="716.3" width="505" height="1.7" fill="#5e5e5e" stroke="none" stroke-width="1" rx="0" fill-opacity="0.7"/>
<rect x="0" y="738" width="1366" height="1.5" fill="#2a2a2a" stroke="none" stroke-width="1" rx="0" />
<text x="12.5" y="733" fill="#000" font-size="13.5" text-anchor="start" textLength="131.5" lengthAdjust="spacingAndGlyphs" >737.9635, -72.5941, 0.0000</text>
<line x1="177" y1="717" x2="177" y2="738" stroke="#666" stroke-width="1" />
<defs><linearGradient id="sbn" x1="0" y1="0" x2="0" y2="1"><stop offset="0" stop-color="#c0c0c0"/><stop offset="1" stop-color="#a0a0a0"/></linearGradient></defs>
<defs><linearGradient id="sbh" x1="0" y1="0" x2="0" y2="1"><stop offset="0" stop-color="#e6f4fb"/><stop offset="0.5" stop-color="#c4e2f0"/><stop offset="1" stop-color="#9accdf"/></linearGradient></defs>
<rect x="178" y="717" width="21" height="21" fill="url(#sbn)" stroke="none" stroke-width="1" rx="0" />
<line x1="199.5" y1="717" x2="199.5" y2="738" stroke="#6e6e6e" stroke-width="1" />
<rect x="200" y="717" width="21" height="21" fill="url(#sbn)" stroke="none" stroke-width="1" rx="0" />
<line x1="221.5" y1="717" x2="221.5" y2="738" stroke="#6e6e6e" stroke-width="1" />
<rect x="222" y="717" width="21" height="21" fill="url(#sbn)" stroke="none" stroke-width="1" rx="0" />
<line x1="243.5" y1="717" x2="243.5" y2="738" stroke="#6e6e6e" stroke-width="1" />
<rect x="244" y="717" width="21" height="21" fill="url(#sbn)" stroke="none" stroke-width="1" rx="0" />
<line x1="265.5" y1="717" x2="265.5" y2="738" stroke="#6e6e6e" stroke-width="1" />
<rect x="266" y="717" width="21" height="21" fill="url(#sbn)" stroke="none" stroke-width="1" rx="0" />
<line x1="287.5" y1="717" x2="287.5" y2="738" stroke="#6e6e6e" stroke-width="1" />
<rect x="288" y="717" width="21" height="21" fill="url(#sbh)" stroke="none" stroke-width="1" rx="0" />
<line x1="309.5" y1="717" x2="309.5" y2="738" stroke="#6e6e6e" stroke-width="1" />
<rect x="310" y="717" width="21" height="21" fill="url(#sbh)" stroke="none" stroke-width="1" rx="0" />
<line x1="331.5" y1="717" x2="331.5" y2="738" stroke="#6e6e6e" stroke-width="1" />
<rect x="332" y="717" width="21" height="21" fill="url(#sbh)" stroke="none" stroke-width="1" rx="0" />
<line x1="353.5" y1="717" x2="353.5" y2="738" stroke="#6e6e6e" stroke-width="1" />
<rect x="354" y="717" width="21" height="21" fill="url(#sbh)" stroke="none" stroke-width="1" rx="0" />
<line x1="375.5" y1="717" x2="375.5" y2="738" stroke="#6e6e6e" stroke-width="1" />
<rect x="376" y="717" width="21" height="21" fill="url(#sbh)" stroke="none" stroke-width="1" rx="0" />
<line x1="397.5" y1="717" x2="397.5" y2="738" stroke="#6e6e6e" stroke-width="1" />
<rect x="398" y="717" width="21" height="21" fill="url(#sbn)" stroke="none" stroke-width="1" rx="0" />
<line x1="419.5" y1="717" x2="419.5" y2="738" stroke="#6e6e6e" stroke-width="1" />
<rect x="419.5" y="717" width="21.0" height="21" fill="url(#sbn)" stroke="none" stroke-width="1" rx="0" />
<line x1="441.0" y1="717" x2="441.0" y2="738" stroke="#6e6e6e" stroke-width="1" />
<rect x="442" y="717" width="21" height="21" fill="url(#sbn)" stroke="none" stroke-width="1" rx="0" />
<line x1="463.5" y1="717" x2="463.5" y2="738" stroke="#6e6e6e" stroke-width="1" />
<rect x="464" y="717" width="21" height="21" fill="url(#sbn)" stroke="none" stroke-width="1" rx="0" />
<line x1="485.5" y1="717" x2="485.5" y2="738" stroke="#6e6e6e" stroke-width="1" />
<rect x="485.5" y="717" width="21.0" height="21" fill="url(#sbn)" stroke="none" stroke-width="1" rx="0" />
<line x1="507.0" y1="717" x2="507.0" y2="738" stroke="#6e6e6e" stroke-width="1" />
<path d="M186 719 V733 M179.5 726 H193" stroke="#111" stroke-width="1.2" fill="none" />
<rect x="184" y="724" width="4" height="4" fill="none" stroke="#111" stroke-width="1" rx="0" />
<rect x="189.5" y="730.5" width="3.5" height="3.5" fill="#fff" stroke="#c03010" stroke-width="1" rx="0" />
<text x="192" y="731" fill="#2a50c0" font-size="8" text-anchor="start" >P</text>
<line x1="204" y1="721.5" x2="212" y2="721.5" stroke="#111" stroke-width="1" stroke-dasharray="1 1" />
<line x1="204" y1="724" x2="212" y2="724" stroke="#111" stroke-width="1" stroke-dasharray="1 1" />
<line x1="204" y1="726.5" x2="212" y2="726.5" stroke="#111" stroke-width="1" stroke-dasharray="1 1" />
<line x1="204" y1="729" x2="212" y2="729" stroke="#111" stroke-width="1" stroke-dasharray="1 1" />
<path d="M214.5 721 V728" stroke="#111" stroke-width="1.4" fill="none" />
<rect x="213.8" y="729.5" width="1.4" height="1.5" fill="#111" stroke="none" stroke-width="1" rx="0" />
<line x1="224.5" y1="720" x2="224.5" y2="736" stroke="#111" stroke-width="1" />
<line x1="224" y1="720.5" x2="241.5" y2="720.5" stroke="#111" stroke-width="1" />
<line x1="227.8" y1="720" x2="227.8" y2="736" stroke="#111" stroke-width="1" />
<line x1="224" y1="723.6" x2="241.5" y2="723.6" stroke="#111" stroke-width="1" />
<line x1="231.1" y1="720" x2="231.1" y2="736" stroke="#111" stroke-width="1" />
<line x1="224" y1="726.7" x2="241.5" y2="726.7" stroke="#111" stroke-width="1" />
<line x1="234.4" y1="720" x2="234.4" y2="736" stroke="#111" stroke-width="1" />
<line x1="224" y1="729.8" x2="241.5" y2="729.8" stroke="#111" stroke-width="1" />
<line x1="237.7" y1="720" x2="237.7" y2="736" stroke="#111" stroke-width="1" />
<line x1="224" y1="732.9" x2="241.5" y2="732.9" stroke="#111" stroke-width="1" />
<line x1="241.0" y1="720" x2="241.0" y2="736" stroke="#111" stroke-width="1" />
<line x1="224" y1="736.0" x2="241.5" y2="736.0" stroke="#111" stroke-width="1" />
<path d="M248.5 721 V734.5 H261" stroke="#555" stroke-width="1.2" fill="none" />
<path d="M279 721 L272 730 H282" stroke="#111" stroke-width="1.2" fill="none" />
<path d="M279 729.5 A4.5 4.5 0 1 1 274.5 725" stroke="#333" stroke-width="1.2" fill="none" />
<rect x="293.5" y="721.5" width="13.0" height="13.0" fill="#f4f6f8" stroke="#555" stroke-width="1.2" rx="0" />
<circle cx="291.5" cy="719.5" r="1.8" fill="#fff" stroke="#e04010" stroke-width="1" />
<path d="M314.5 725 H326 V734 H314.5 Z M314.5 725 L318 721 H329.5 V730.5 L326 734 M326 725 L329.5 721" stroke="#555" stroke-width="1.1" fill="#eef0f4" />
<circle cx="313" cy="735.5" r="1.8" fill="#fff" stroke="#e04010" stroke-width="1" />
<path d="M348 723 L336 733 H350" stroke="#111" stroke-width="1.3" fill="none" />
<path d="M357.5 720 V735 H372 M357.5 735 L369 724" stroke="#222" stroke-width="1.1" fill="none" />
<path d="M357.5 720 l-1.8 3 h3.6 Z M372 735 l-3 -1.8 v3.6 Z" stroke="none" stroke-width="1" fill="#222" />
<path d="M370 718.5 L366.5 723.5 H369 L367 727.5 L372.5 722 H370 L371.8 718.5 Z" stroke="none" stroke-width="1" fill="#f09010" />
<path d="M383 722.5 V731.5 M379 727 H388" stroke="#111" stroke-width="1.4" fill="none" />
<rect x="387" y="728.5" width="5" height="3.0" fill="none" stroke="#111" stroke-width="1.2" rx="0" />
<path d="M408.5 720.5 V734 M402 727 H415" stroke="#111" stroke-width="2" fill="none" />
<rect x="421.5" y="719" width="18.0" height="17" fill="#a8d0f4" stroke="#1e6ad0" stroke-width="1.6" rx="0" />
<rect x="424.0" y="721.5" width="1.6" height="1.6" fill="#e8f4ff" stroke="none" stroke-width="1" rx="0" />
<rect x="424.0" y="724.9" width="1.6" height="1.6" fill="#e8f4ff" stroke="none" stroke-width="1" rx="0" />
<rect x="424.0" y="728.3" width="1.6" height="1.6" fill="#e8f4ff" stroke="none" stroke-width="1" rx="0" />
<rect x="424.0" y="731.7" width="1.6" height="1.6" fill="#e8f4ff" stroke="none" stroke-width="1" rx="0" />
<rect x="427.6" y="721.5" width="1.6" height="1.6" fill="#e8f4ff" stroke="none" stroke-width="1" rx="0" />
<rect x="427.6" y="724.9" width="1.6" height="1.6" fill="#e8f4ff" stroke="none" stroke-width="1" rx="0" />
<rect x="427.6" y="728.3" width="1.6" height="1.6" fill="#e8f4ff" stroke="none" stroke-width="1" rx="0" />
<rect x="427.6" y="731.7" width="1.6" height="1.6" fill="#e8f4ff" stroke="none" stroke-width="1" rx="0" />
<rect x="431.2" y="721.5" width="1.6" height="1.6" fill="#e8f4ff" stroke="none" stroke-width="1" rx="0" />
<rect x="431.2" y="724.9" width="1.6" height="1.6" fill="#e8f4ff" stroke="none" stroke-width="1" rx="0" />
<rect x="431.2" y="728.3" width="1.6" height="1.6" fill="#e8f4ff" stroke="none" stroke-width="1" rx="0" />
<rect x="431.2" y="731.7" width="1.6" height="1.6" fill="#e8f4ff" stroke="none" stroke-width="1" rx="0" />
<rect x="434.8" y="721.5" width="1.6" height="1.6" fill="#e8f4ff" stroke="none" stroke-width="1" rx="0" />
<rect x="434.8" y="724.9" width="1.6" height="1.6" fill="#e8f4ff" stroke="none" stroke-width="1" rx="0" />
<rect x="434.8" y="728.3" width="1.6" height="1.6" fill="#e8f4ff" stroke="none" stroke-width="1" rx="0" />
<rect x="434.8" y="731.7" width="1.6" height="1.6" fill="#e8f4ff" stroke="none" stroke-width="1" rx="0" />
<rect x="449.5" y="721.5" width="6.5" height="11.5" fill="#fff" stroke="#111" stroke-width="1.2" rx="0" />
<line x1="451" y1="724" x2="454.5" y2="724" stroke="#111" stroke-width="1" stroke-dasharray="1 .8" />
<line x1="451" y1="727" x2="454.5" y2="727" stroke="#111" stroke-width="1" stroke-dasharray="1 .8" />
<line x1="451" y1="730" x2="454.5" y2="730" stroke="#111" stroke-width="1" stroke-dasharray="1 .8" />
<path d="M469 719 V726 M465.5 722.5 H472.5" stroke="#222" stroke-width="1.1" fill="none" />
<rect x="471.5" y="724.5" width="6.0" height="6.0" fill="#e8e8e8" stroke="#444" stroke-width="1" rx="0" />
<rect x="474.5" y="727.5" width="7.0" height="7.0" fill="#70b050" stroke="#2a6a1a" stroke-width="1" rx="0" />
<path d="M493.5 719.5 H498.5 V724.5 H503.5 V729.5 H498.5 V734.5 H493.5 V729.5 H488.5 V724.5 H493.5 Z" stroke="#334" stroke-width="1.2" fill="#f4f4f8" />
<rect x="1012.5" y="717" width="43.0" height="21" fill="url(#sbn)" stroke="none" stroke-width="1" rx="0" />
<line x1="1056.0" y1="717" x2="1056.0" y2="738" stroke="#6e6e6e" stroke-width="1" />
<line x1="1012.0" y1="717" x2="1012.0" y2="738" stroke="#7a7a7a" stroke-width="1" />
<rect x="1057" y="717" width="20.5" height="21" fill="url(#sbn)" stroke="none" stroke-width="1" rx="0" />
<line x1="1078.0" y1="717" x2="1078.0" y2="738" stroke="#6e6e6e" stroke-width="1" />
<line x1="1056.5" y1="717" x2="1056.5" y2="738" stroke="#7a7a7a" stroke-width="1" />
<rect x="1079" y="717" width="20.5" height="21" fill="url(#sbn)" stroke="none" stroke-width="1" rx="0" />
<line x1="1100.0" y1="717" x2="1100.0" y2="738" stroke="#6e6e6e" stroke-width="1" />
<line x1="1078.5" y1="717" x2="1078.5" y2="738" stroke="#7a7a7a" stroke-width="1" />
<rect x="1113" y="717" width="49.5" height="21" fill="url(#sbn)" stroke="none" stroke-width="1" rx="0" />
<line x1="1163.0" y1="717" x2="1163.0" y2="738" stroke="#6e6e6e" stroke-width="1" />
<line x1="1112.5" y1="717" x2="1112.5" y2="738" stroke="#7a7a7a" stroke-width="1" />
<rect x="1164" y="717" width="21" height="21" fill="url(#sbn)" stroke="none" stroke-width="1" rx="0" />
<line x1="1185.5" y1="717" x2="1185.5" y2="738" stroke="#6e6e6e" stroke-width="1" />
<line x1="1163.5" y1="717" x2="1163.5" y2="738" stroke="#7a7a7a" stroke-width="1" />
<rect x="1186" y="717" width="21" height="21" fill="url(#sbn)" stroke="none" stroke-width="1" rx="0" />
<line x1="1207.5" y1="717" x2="1207.5" y2="738" stroke="#6e6e6e" stroke-width="1" />
<line x1="1185.5" y1="717" x2="1185.5" y2="738" stroke="#7a7a7a" stroke-width="1" />
<rect x="1214.5" y="717" width="20.5" height="21" fill="url(#sbn)" stroke="none" stroke-width="1" rx="0" />
<line x1="1235.5" y1="717" x2="1235.5" y2="738" stroke="#6e6e6e" stroke-width="1" />
<line x1="1214.0" y1="717" x2="1214.0" y2="738" stroke="#7a7a7a" stroke-width="1" />
<rect x="1236.5" y="717" width="21.0" height="21" fill="url(#sbn)" stroke="none" stroke-width="1" rx="0" />
<line x1="1258.0" y1="717" x2="1258.0" y2="738" stroke="#6e6e6e" stroke-width="1" />
<line x1="1236.0" y1="717" x2="1236.0" y2="738" stroke="#7a7a7a" stroke-width="1" />
<rect x="1258.5" y="717" width="20.5" height="21" fill="url(#sbn)" stroke="none" stroke-width="1" rx="0" />
<line x1="1279.5" y1="717" x2="1279.5" y2="738" stroke="#6e6e6e" stroke-width="1" />
<line x1="1258.0" y1="717" x2="1258.0" y2="738" stroke="#7a7a7a" stroke-width="1" />
<rect x="1280.5" y="717" width="50.5" height="21" fill="url(#sbn)" stroke="none" stroke-width="1" rx="0" />
<line x1="1331.5" y1="717" x2="1331.5" y2="738" stroke="#6e6e6e" stroke-width="1" />
<line x1="1280.0" y1="717" x2="1280.0" y2="738" stroke="#7a7a7a" stroke-width="1" />
<rect x="1333" y="717" width="8.5" height="21" fill="url(#sbn)" stroke="none" stroke-width="1" rx="0" />
<line x1="1342.0" y1="717" x2="1342.0" y2="738" stroke="#6e6e6e" stroke-width="1" />
<line x1="1332.5" y1="717" x2="1332.5" y2="738" stroke="#7a7a7a" stroke-width="1" />
<rect x="1343" y="717" width="23" height="21" fill="url(#sbn)" stroke="none" stroke-width="1" rx="0" />
<line x1="1366.5" y1="717" x2="1366.5" y2="738" stroke="#6e6e6e" stroke-width="1" />
<line x1="1342.5" y1="717" x2="1342.5" y2="738" stroke="#7a7a7a" stroke-width="1" />
<rect x="1100.5" y="717" width="11.5" height="21" fill="#7c7c7c" stroke="none" stroke-width="1" rx="0" />
<rect x="1208" y="717" width="5.5" height="21" fill="#7c7c7c" stroke="none" stroke-width="1" rx="0" />
<text x="1015.5" y="732" fill="#000" font-size="12.5" text-anchor="start" textLength="37" lengthAdjust="spacingAndGlyphs" >MODEL</text>
<path d="M1062 720.5 V731 H1073 Z" stroke="#222" stroke-width="1.1" fill="#e8e8e8" />
<path d="M1064.5 725 V729 H1068.5 Z" stroke="#222" stroke-width="0.8" fill="none" />
<line x1="1060" y1="734" x2="1075" y2="734" stroke="#444" stroke-width="1.5" />
<rect x="1081.5" y="720.5" width="7.0" height="7.0" fill="#eee" stroke="#444" stroke-width="1" rx="0" />
<rect x="1090" y="720.5" width="7" height="7.0" fill="#eee" stroke="#444" stroke-width="1" rx="0" />
<line x1="1081.5" y1="731.5" x2="1097.5" y2="731.5" stroke="#444" stroke-width="2" />
<path d="M1122.5 720.5 L1124.5 728.5 L1130.0 734.0 L1123.5 731.0 L1122.5 732.0 L1121.5 731.0 L1115.0 734.0 L1120.5 728.5 Z" stroke="#333" stroke-width="1" fill="#f4f4f4" />
<text x="1133" y="732" fill="#111" font-size="12.5" text-anchor="start" textLength="14" lengthAdjust="spacingAndGlyphs" >1:1</text>
<path d="M1151 724.5 H1158 L1154.5 728.5 Z" stroke="none" stroke-width="1" fill="#111" />
<path d="M1173 720.5 L1175 728.5 L1180.5 734.0 L1174 731.0 L1173 732.0 L1172 731.0 L1165.5 734.0 L1171 728.5 Z" stroke="#333" stroke-width="1" fill="#f4f4f4" />
<circle cx="1178.5" cy="730" r="2.6" fill="#ffd040" stroke="#e08000" stroke-width="0.8" />
<path d="M1196 720.5 L1198 728.5 L1203.5 734.0 L1197 731.0 L1196 732.0 L1195 731.0 L1188.5 734.0 L1194 728.5 Z" stroke="#8a8a8a" stroke-width="1" fill="#c4c4c4" />
<path d="M1192 722 l4 3 l-3 2 l4 3" stroke="#8a8a8a" stroke-width="1" fill="none" />
<circle cx="1224.5" cy="727" r="6" fill="none" stroke="#222" stroke-width="2.2" stroke-dasharray="2.6 1.6"/>
<circle cx="1224.5" cy="727" r="5" fill="#eee" stroke="#222" stroke-width="1.2" />
<circle cx="1224.5" cy="727" r="2.3" fill="#bbb" stroke="#222" stroke-width="1.2" />
<path d="M1228 734 H1232 V730 Z" stroke="none" stroke-width="1" fill="#111" />
<rect x="1239.5" y="726.5" width="11.5" height="8.0" fill="#e8e8e8" stroke="#222" stroke-width="1.3" rx="0" />
<path d="M1248 726.5 V723.5 a3.2 3.2 0 0 1 6.4 0 V725.5" stroke="#222" stroke-width="1.5" fill="none" />
<line x1="1245" y1="728.5" x2="1245" y2="732.5" stroke="#222" stroke-width="1.4" />
<circle cx="1268.5" cy="727" r="6.5" fill="#777" stroke="#555" stroke-width="1" />
<path d="M1264 730 A5.5 5.5 0 0 1 1273 723.5" stroke="#e8e8e8" stroke-width="2" fill="none" />
<path d="M1268.5 727 L1265 722" stroke="#f4f4f4" stroke-width="1.4" fill="none" />
<rect x="1283.5" y="719.5" width="43.0" height="16.5" fill="#8e8e8e" stroke="#6a6a6a" stroke-width="1" rx="1" />
<path d="M1286 733 V723 H1291 L1292.5 725 H1298 V733 Z" stroke="none" stroke-width="1" fill="#e8c020" />
<rect x="1288" y="720.5" width="9" height="7.5" fill="#4a80d0" stroke="#234" stroke-width="0.8" rx="0" />
<path d="M1291 731 L1294 734.5 L1299.5 728" stroke="#1a9a1a" stroke-width="2" fill="none" />
<path d="M1312.5 720 a4.6 4.6 0 0 1 4.6 4.6 c0 2.6 -2 3.4 -2.2 5.6 h-4.8 c-0.2 -2.2 -2.2 -3 -2.2 -5.6 a4.6 4.6 0 0 1 4.6 -4.6 Z" stroke="#a08020" stroke-width="0.8" fill="#ffe890" />
<rect x="1310.5" y="730.5" width="4.0" height="4.0" fill="#ddd" stroke="#777" stroke-width="0.8" rx="0" />
<path d="M1334.5 726.5 H1340.5 L1337.5 730.5 Z" stroke="none" stroke-width="1" fill="#111" />
<rect x="1347.5" y="720.5" width="13.0" height="13.0" fill="#f4f4f4" stroke="#333" stroke-width="1.3" rx="0" />
<rect x="1348" y="721" width="12" height="2.5" fill="#555" stroke="none" stroke-width="1" rx="0" />
<defs><linearGradient id="tk" x1="0" y1="0" x2="0" y2="1"><stop offset="0" stop-color="#3a3a3a"/><stop offset="0.08" stop-color="#161616"/><stop offset="1" stop-color="#0a0a0a"/></linearGradient></defs>
<rect x="0" y="739.5" width="1366" height="28.5" fill="url(#tk)" stroke="none" stroke-width="1" rx="0" />
<defs><linearGradient id="sheen" x1="0" y1="0" x2="1" y2="0"><stop offset="0" stop-color="#fff" stop-opacity="0"/><stop offset="0.5" stop-color="#fff" stop-opacity="0.10"/><stop offset="1" stop-color="#fff" stop-opacity="0"/></linearGradient></defs>
<path d="M420 768 L470 739.5 H560 L510 768 Z" stroke="none" stroke-width="1" fill="url(#sheen)" />
<path d="M1260 768 L1310 739.5 H1366 V768 Z" stroke="none" stroke-width="1" fill="url(#sheen)" />
<defs><linearGradient id="tbn" x1="0" y1="0" x2="0" y2="1"><stop offset="0" stop-color="#4a4a4a"/><stop offset="0.5" stop-color="#2c2c2c"/><stop offset="0.5" stop-color="#1a1a1a"/><stop offset="1" stop-color="#222"/></linearGradient></defs>
<defs><linearGradient id="tba" x1="0" y1="0" x2="0" y2="1"><stop offset="0" stop-color="#b0b0b0"/><stop offset="0.5" stop-color="#8a8a8a"/><stop offset="0.5" stop-color="#6a6a6a"/><stop offset="1" stop-color="#7e7e7e"/></linearGradient></defs>
<rect x="60.5" y="740" width="40.5" height="30" fill="url(#tbn)" stroke="#6a6a6a" stroke-width="1" rx="2" />
<rect x="106.5" y="740" width="40.5" height="30" fill="url(#tbn)" stroke="#6a6a6a" stroke-width="1" rx="2" />
<rect x="152.5" y="740" width="40.0" height="30" fill="url(#tbn)" stroke="#6a6a6a" stroke-width="1" rx="2" />
<rect x="198.0" y="740" width="41.0" height="30" fill="url(#tba)" stroke="#c0c0c0" stroke-width="1" rx="2" />
<circle cx="80.5" cy="753.5" r="7.5" fill="#e8c020" stroke="none" stroke-width="1" />
<path d="M80.5 753.5 L74 749.8 A7.5 7.5 0 0 1 87 749.8 Z" stroke="none" stroke-width="1" fill="#d83020" />
<path d="M80.5 753.5 L74 749.8 A7.5 7.5 0 0 0 80.5 761 Z" stroke="none" stroke-width="1" fill="#30a040" />
<circle cx="80.5" cy="753.5" r="3.4" fill="#4080e0" stroke="#fff" stroke-width="1.2" />
<rect x="119.5" y="747.5" width="14.5" height="11.0" fill="#e8f0f8" stroke="#3a80d0" stroke-width="1.6" rx="0" />
<rect x="121.5" y="749.5" width="10.5" height="7.0" fill="#5a9ad0" stroke="none" stroke-width="1" rx="0" />
<path d="M121.5 756.5 L125 752 L128 755 L130 753.5 L132 756.5 Z" stroke="none" stroke-width="1" fill="#4a8a40" />
<path d="M165 760 V748 H170.5 L172 750 H180.5 V760 Z" stroke="none" stroke-width="1" fill="#e8c860" />
<path d="M165 760 L166.5 752 H181.5 L180.5 760 Z" stroke="none" stroke-width="1" fill="#f4dc88" />
<rect x="168" y="756" width="10" height="6" fill="#60a8e0" stroke="#3a80c0" stroke-width="0.8" rx="0" />
<rect x="210.5" y="743.5" width="16.0" height="18.5" fill="#d02020" stroke="none" stroke-width="1" rx="0" />
<path d="M218.5 746 L212 759.5 L215 760 L216.3 757.5 L220.7 757.5 L222 760 L225 759.5 Z" stroke="none" stroke-width="1" fill="#8a0c08" />
<path d="M218.5 746 L212 759.5 L215 760 L218.5 751 Z" stroke="none" stroke-width="1" fill="#f05040" />
<defs><radialGradient id="orb" cx="0.5" cy="0.35" r="0.65"><stop offset="0" stop-color="#8ad0f8"/><stop offset="0.5" stop-color="#2a7ac8"/><stop offset="1" stop-color="#0a2a6a"/></radialGradient></defs>
<circle cx="26.8" cy="752" r="18.5" fill="url(#orb)" stroke="#9ac8e8" stroke-width="1.2" />
<path d="M17 746.5 Q21 744 25.5 745.5 L24.5 752 Q20.5 750.5 16 752.5 Z" stroke="none" stroke-width="1" fill="#f04a20" />
<path d="M27.5 746 Q32 747.5 37 745 L36 751.5 Q31.5 754 26.5 752.5 Z" stroke="none" stroke-width="1" fill="#80c830" />
<path d="M15.7 754.5 Q20 752.5 24.3 754 L23.3 760.5 Q19 759 14.7 761 Z" stroke="none" stroke-width="1" fill="#30a0e8" />
<path d="M26.2 754.5 Q31 756 35.7 753.5 L34.7 760 Q30 762.5 25.2 761 Z" stroke="none" stroke-width="1" fill="#f8c820" />
<path d="M1188.5 757.5 L1192.5 753 L1196.5 757.5 Z" stroke="none" stroke-width="1" fill="#f0f0f0" />
<rect x="1209" y="757" width="2" height="2" fill="#eee" stroke="none" stroke-width="1" rx="0" />
<rect x="1212" y="755" width="2" height="4" fill="#eee" stroke="none" stroke-width="1" rx="0" />
<rect x="1215" y="753" width="2" height="6" fill="#eee" stroke="none" stroke-width="1" rx="0" />
<rect x="1218" y="750" width="2" height="9" fill="#888" stroke="none" stroke-width="1" rx="0" />
<rect x="1221" y="748" width="2" height="11" fill="#888" stroke="none" stroke-width="1" rx="0" />
<rect x="1237.5" y="748.5" width="8.0" height="12.0" fill="#222" stroke="#f0f0f0" stroke-width="1.4" rx="1.5" />
<rect x="1239.5" y="746.5" width="4.0" height="2.0" fill="#f0f0f0" stroke="none" stroke-width="1" rx="0" />
<rect x="1239.5" y="755" width="4.0" height="4" fill="#f0f0f0" stroke="none" stroke-width="1" rx="0" />
<path d="M1259.5 751.5 H1262.5 L1266.5 747.5 V760.5 L1262.5 756.5 H1259.5 Z" stroke="none" stroke-width="1" fill="#f0f0f0" />
<path d="M1269 750.5 Q1271.5 754 1269 757.5" stroke="#ccc" stroke-width="1.2" fill="none" />
<text x="1294.5" y="757.5" fill="#fff" font-size="12.5" text-anchor="start" textLength="42.5" lengthAdjust="spacingAndGlyphs" >4:27 PM</text>
<defs><linearGradient id="sd" x1="0" y1="0" x2="0" y2="1"><stop offset="0" stop-color="#7a7a7a"/><stop offset="0.5" stop-color="#3a3a3a"/><stop offset="1" stop-color="#555"/></linearGradient></defs>
<rect x="1352.5" y="740" width="13.5" height="28" fill="url(#sd)" stroke="#888" stroke-width="1" rx="0" />
</svg>
<!--TABS-->
<!--STATUS-->
<!--TASK-->
<!--TITLE-->
</body></html>
